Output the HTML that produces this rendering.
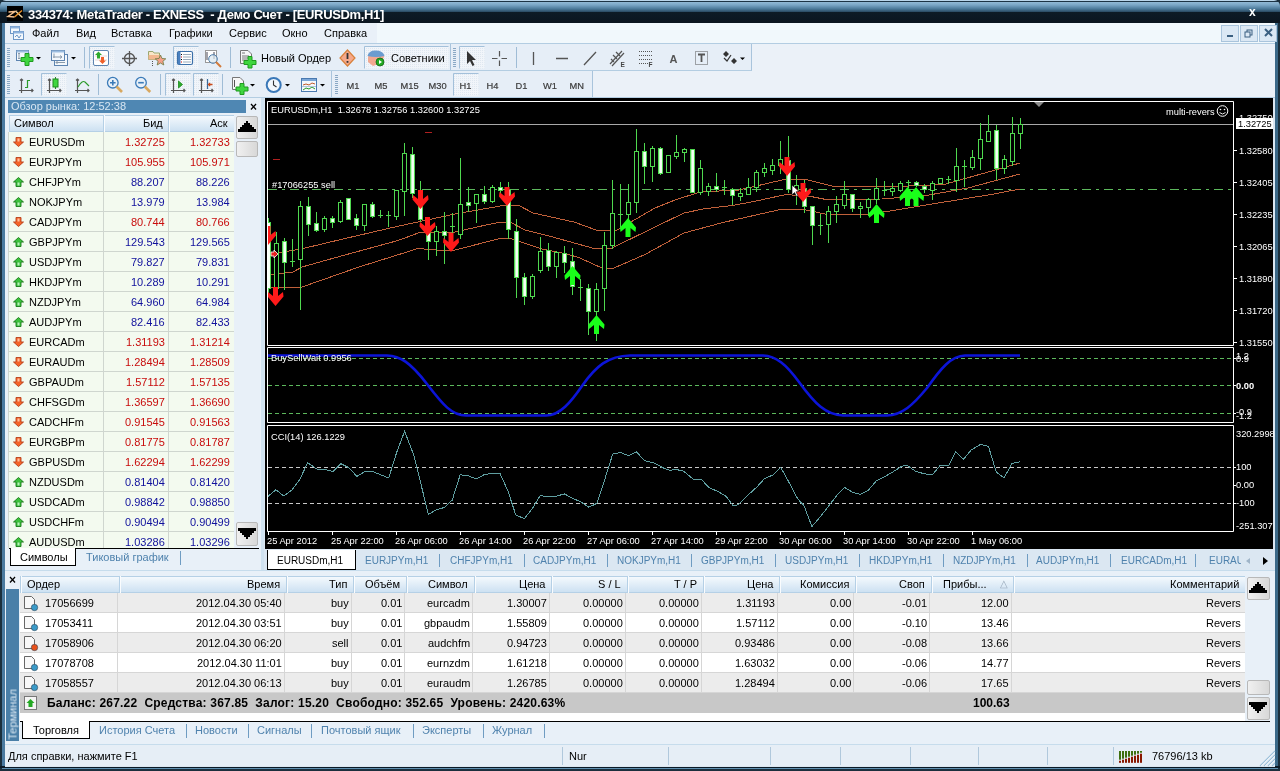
<!DOCTYPE html><html><head><meta charset="utf-8"><style>
*{margin:0;padding:0;box-sizing:border-box}
html,body{width:1280px;height:771px;overflow:hidden;-webkit-font-smoothing:antialiased;background:#3e6a8a;font-family:"Liberation Sans",sans-serif;font-size:11px;color:#000;position:relative}
.a{position:absolute}
.t{position:absolute;white-space:nowrap;line-height:13px}
svg{position:absolute;overflow:visible}
.t{will-change:transform}
</style></head><body><div class="a" style="left:0px;top:0px;width:1280px;height:771px;background:#1b2f3d"></div>
<div class="a" style="left:0px;top:0px;width:1280px;height:23px;background:linear-gradient(#b9d5ea 0,#b9d5ea 1px,#1d3445 1px,#1d3445 2px,#92bad6 2px,#7aa6c6 5px,#4a7898 9px,#2e5069 11.5px,#0d1b26 12px,#0b1620 22px);border-radius:6px 6px 0 0"></div>
<div class="a" style="left:2px;top:23px;width:3px;height:745px;background:#4a7aa0"></div>
<div class="a" style="left:1275px;top:23px;width:3px;height:745px;background:#3a6888"></div>
<div class="a" style="left:0px;top:766px;width:1280px;height:2px;background:#0b1a26"></div>
<div class="a" style="left:2px;top:768px;width:1276px;height:1px;background:#5f8fb0"></div>
<div class="a" style="left:7px;top:6px;width:16px;height:15px;background:#000"></div>
<svg style="left:7px;top:6px" width="16" height="15"><path d="M1.5 6 L8 5.5 L1 10.5 L7.5 11" stroke="#f2c090" stroke-width="1.5" fill="none"/><path d="M9 5.5 L15.5 11.5" stroke="#f0d8a8" stroke-width="1.5"/><path d="M15 4.5 L7.5 11" stroke="#e8902a" stroke-width="1.5"/></svg>
<div class="t" style="left:28px;top:7px;font-size:13px;color:#fff;font-weight:bold;letter-spacing:-0.34px;line-height:15px">334374: MetaTrader - EXNESS&nbsp; - Демо Счет - [EURUSDm,H1]</div>
<div class="t" style="left:1249px;top:6px;font-size:12px;color:#fff;font-weight:bold;">x</div>
<div class="a" style="left:5px;top:23px;width:1270px;height:20px;background:#f1f8fc"></div>
<div class="a" style="left:5px;top:23px;width:372px;height:20px;background:#e9f0f8"></div>
<div class="a" style="left:5px;top:43px;width:1270px;height:1px;background:#b3cde2"></div>
<svg style="left:10px;top:26px" width="14" height="14"><rect x="0.5" y="0.5" width="9" height="7" fill="#f4f8fc" stroke="#6d96c6"/><rect x="0.5" y="0.5" width="9" height="2" fill="#8fb3dd"/><rect x="3.5" y="5.5" width="10" height="8" fill="#f4f8fc" stroke="#6d96c6"/><rect x="3.5" y="5.5" width="10" height="2" fill="#8fb3dd"/><path d="M5 11 L7 9 L9 12 L11 9" stroke="#6d96c6" fill="none"/></svg>
<div class="t" style="left:32px;top:27px;font-size:11px;color:#000;font-weight:normal;">Файл</div>
<div class="t" style="left:76px;top:27px;font-size:11px;color:#000;font-weight:normal;">Вид</div>
<div class="t" style="left:111px;top:27px;font-size:11px;color:#000;font-weight:normal;">Вставка</div>
<div class="t" style="left:169px;top:27px;font-size:11px;color:#000;font-weight:normal;">Графики</div>
<div class="t" style="left:229px;top:27px;font-size:11px;color:#000;font-weight:normal;">Сервис</div>
<div class="t" style="left:282px;top:27px;font-size:11px;color:#000;font-weight:normal;">Окно</div>
<div class="t" style="left:324px;top:27px;font-size:11px;color:#000;font-weight:normal;">Справка</div>
<div class="a" style="left:1221px;top:25px;width:18px;height:17px;background:#dbe8f4;border:1px solid #a9c4dc"></div>
<div class="a" style="left:1240px;top:25px;width:18px;height:17px;background:#dbe8f4;border:1px solid #a9c4dc"></div>
<div class="a" style="left:1259px;top:25px;width:18px;height:17px;background:#dbe8f4;border:1px solid #a9c4dc"></div>
<svg style="left:1221px;top:25px" width="56" height="17"><rect x="6" y="10" width="6" height="2" fill="#3a5f80"/><rect x="26" y="5" width="5" height="5" fill="none" stroke="#3a5f80"/><rect x="24" y="7" width="5" height="5" fill="#dbe8f4" stroke="#3a5f80"/><path d="M44 4 L51 11 M51 4 L44 11" stroke="#3a5f80" stroke-width="2"/></svg>
<div class="a" style="left:5px;top:44px;width:1270px;height:26px;background:#e6eef7"></div>
<div class="a" style="left:5px;top:70px;width:747px;height:1px;background:#b3cde2"></div>
<div class="a" style="left:5px;top:71px;width:1270px;height:26px;background:#e6eef7"></div>
<div class="a" style="left:5px;top:97px;width:1270px;height:1px;background:#b3cde2"></div>
<svg style="left:0;top:0" width="1280" height="100" viewBox="0 0 1280 100" font-family="Liberation Sans"><defs><pattern id="dots" width="2" height="2" patternUnits="userSpaceOnUse"><rect width="2" height="2" fill="#f1f5fa"/><rect width="1" height="1" fill="#dfe7f0"/></pattern></defs><rect x="752" y="44" width="523" height="27" fill="#ebf1f8"/><rect x="593" y="71" width="682" height="26" fill="#ebf1f8"/><path d="M751.5 44 V70.5 M592.5 71 V97" stroke="#a9c4dc"/><path d="M450.5 44 V70 M331.5 71 V97" stroke="#a9c4dc"/><rect x="7" y="48" width="3" height="1" fill="#8aa8c4"/><rect x="7" y="50" width="3" height="1" fill="#8aa8c4"/><rect x="7" y="52" width="3" height="1" fill="#8aa8c4"/><rect x="7" y="54" width="3" height="1" fill="#8aa8c4"/><rect x="7" y="56" width="3" height="1" fill="#8aa8c4"/><rect x="7" y="58" width="3" height="1" fill="#8aa8c4"/><rect x="7" y="60" width="3" height="1" fill="#8aa8c4"/><rect x="7" y="62" width="3" height="1" fill="#8aa8c4"/><rect x="7" y="64" width="3" height="1" fill="#8aa8c4"/><rect x="7" y="66" width="3" height="1" fill="#8aa8c4"/><rect x="453" y="48" width="3" height="1" fill="#8aa8c4"/><rect x="453" y="50" width="3" height="1" fill="#8aa8c4"/><rect x="453" y="52" width="3" height="1" fill="#8aa8c4"/><rect x="453" y="54" width="3" height="1" fill="#8aa8c4"/><rect x="453" y="56" width="3" height="1" fill="#8aa8c4"/><rect x="453" y="58" width="3" height="1" fill="#8aa8c4"/><rect x="453" y="60" width="3" height="1" fill="#8aa8c4"/><rect x="453" y="62" width="3" height="1" fill="#8aa8c4"/><rect x="453" y="64" width="3" height="1" fill="#8aa8c4"/><rect x="453" y="66" width="3" height="1" fill="#8aa8c4"/><rect x="7" y="75" width="3" height="1" fill="#8aa8c4"/><rect x="7" y="77" width="3" height="1" fill="#8aa8c4"/><rect x="7" y="79" width="3" height="1" fill="#8aa8c4"/><rect x="7" y="81" width="3" height="1" fill="#8aa8c4"/><rect x="7" y="83" width="3" height="1" fill="#8aa8c4"/><rect x="7" y="85" width="3" height="1" fill="#8aa8c4"/><rect x="7" y="87" width="3" height="1" fill="#8aa8c4"/><rect x="7" y="89" width="3" height="1" fill="#8aa8c4"/><rect x="7" y="91" width="3" height="1" fill="#8aa8c4"/><rect x="7" y="93" width="3" height="1" fill="#8aa8c4"/><rect x="335" y="75" width="3" height="1" fill="#8aa8c4"/><rect x="335" y="77" width="3" height="1" fill="#8aa8c4"/><rect x="335" y="79" width="3" height="1" fill="#8aa8c4"/><rect x="335" y="81" width="3" height="1" fill="#8aa8c4"/><rect x="335" y="83" width="3" height="1" fill="#8aa8c4"/><rect x="335" y="85" width="3" height="1" fill="#8aa8c4"/><rect x="335" y="87" width="3" height="1" fill="#8aa8c4"/><rect x="335" y="89" width="3" height="1" fill="#8aa8c4"/><rect x="335" y="91" width="3" height="1" fill="#8aa8c4"/><rect x="335" y="93" width="3" height="1" fill="#8aa8c4"/><path d="M84.5 47 V68" stroke="#9fbcd6"/><path d="M230.5 47 V68" stroke="#9fbcd6"/><path d="M516.5 47 V68" stroke="#9fbcd6"/><path d="M98.5 74 V95" stroke="#9fbcd6"/><path d="M160.5 74 V95" stroke="#9fbcd6"/><path d="M222.5 74 V95" stroke="#9fbcd6"/><rect x="89.5" y="46.5" width="25" height="22" fill="url(#dots)"/><path d="M89.5 68.5 V46.5 H114.5" fill="none" stroke="#a3c0da"/><rect x="173.5" y="46.5" width="25" height="22" fill="url(#dots)"/><path d="M173.5 68.5 V46.5 H198.5" fill="none" stroke="#a3c0da"/><rect x="364.5" y="46.5" width="84" height="22" fill="url(#dots)"/><path d="M364.5 68.5 V46.5 H448.5" fill="none" stroke="#a3c0da"/><rect x="459.5" y="46.5" width="25" height="22" fill="url(#dots)"/><path d="M459.5 68.5 V46.5 H484.5" fill="none" stroke="#a3c0da"/><rect x="41.5" y="73.5" width="25" height="22" fill="url(#dots)"/><path d="M41.5 95.5 V73.5 H66.5" fill="none" stroke="#a3c0da"/><rect x="165.5" y="73.5" width="25" height="22" fill="url(#dots)"/><path d="M165.5 95.5 V73.5 H190.5" fill="none" stroke="#a3c0da"/><rect x="193.5" y="73.5" width="25" height="22" fill="url(#dots)"/><path d="M193.5 95.5 V73.5 H218.5" fill="none" stroke="#a3c0da"/><rect x="453.5" y="73.5" width="25" height="22" fill="url(#dots)"/><path d="M453.5 95.5 V73.5 H478.5" fill="none" stroke="#a3c0da"/><rect x="16.5" y="50.5" width="12" height="10" fill="#f4f8fc" stroke="#5d84b0"/><rect x="16.5" y="50.5" width="12" height="2" fill="#9dbde0"/><path d="M19 53 V59 M18 54 L19 53 L20 54 M18 58 L19 59 L20 58" stroke="#8a9aaa" fill="none"/><path d="M25 53.5 H29 V57.5 H33 V61.5 H29 V65.5 H25 V61.5 H21 V57.5 H25 Z" fill="#3fd63f" stroke="#1f9a1f"/><path d="M36 57 H41 L38.5 59.5 Z" fill="#000"/><rect x="54.5" y="54.5" width="13" height="11" fill="#f4f8fc" stroke="#5d84b0"/><rect x="51.5" y="50.5" width="13" height="10" fill="#f4f8fc" stroke="#5d84b0"/><rect x="51.5" y="50.5" width="13" height="2" fill="#9dbde0"/><path d="M53 57 H62 M60 55.5 L62 57 L60 58.5 M56 62.5 H65 M57.5 61 L56 62.5 L57.5 64 M54 53.5 V58" stroke="#8a9aaa" fill="none"/><path d="M71 57 H76 L73.5 59.5 Z" fill="#000"/><rect x="93.5" y="50.5" width="15" height="15" rx="1.5" fill="#fff" stroke="#5d84b0"/><path d="M95 56 H107 M95 60 H107" stroke="#e8d8d8"/><path d="M98.5 51.5 L102 55 H100 V58.5 H97 V55 H95 Z" fill="#2faa2f"/><path d="M102.5 64 L106 60.5 H104 V57 H101 V60.5 H99 Z" fill="#f0602a"/><circle cx="129.5" cy="58.5" r="5" fill="none" stroke="#555" stroke-width="1.3"/><path d="M129.5 51 V66 M122 58.5 H137" stroke="#555" stroke-width="1.3"/><path d="M148.5 51.5 H153 L154 53 H159.5 V59.5 H148.5 Z" fill="#f7e6c8" stroke="#9aa870"/><path d="M148.5 55 H159.5 V59.5 H148.5Z" fill="#f2b890"/><path d="M152.5 61 V66" stroke="#555" stroke-dasharray="1 1"/><path d="M160.5 55 L162 58.5 L165.8 58.8 L162.9 61.3 L163.8 65 L160.5 63 L157.2 65 L158.1 61.3 L155.2 58.8 L159 58.5 Z" fill="#f4a08a" stroke="#6a7a40" stroke-width="0.8"/><rect x="177.5" y="51.5" width="15" height="13" rx="1.5" fill="#fff" stroke="#3b6fa8" stroke-width="1.2"/><rect x="178" y="52" width="2.5" height="12" fill="#4a80c0"/><path d="M183 54.5 H191 M183 57 H191 M183 59.5 H191 M183 62 H191" stroke="#9ab"/><path d="M181 54.5 H182 M181 59.5 H182" stroke="#000"/><path d="M181 57 H182 M181 62 H182" stroke="#c00"/><rect x="205.5" y="50.5" width="11" height="12" fill="#fff" stroke="#999"/><path d="M207 52 V60 M214 52 V59" stroke="#445"/><circle cx="213" cy="59" r="4.3" fill="#dce8f0" fill-opacity="0.7" stroke="#4a7aa8"/><path d="M216 62 L221 67" stroke="#d27a3a" stroke-width="2"/><path d="M240.5 50.5 H248 L251.5 54 V63.5 H240.5 Z" fill="#f7f7f7" stroke="#777"/><path d="M242 53 H245 M242 56 H249 M242 58 H249 M242 60 H247" stroke="#777"/><path d="M248 56.5 H252 V60.5 H256 V64.5 H252 V68 H248 V64.5 H244 V60.5 H248 Z" fill="#3fd63f" stroke="#1f9a1f"/><path d="M347.5 50 L355 58 L347.5 66 L340 58 Z" fill="#f6a88a" stroke="#d8803a" stroke-width="1.2"/><path d="M347.5 53 V59" stroke="#333" stroke-width="1.8"/><rect x="346.6" y="61" width="1.8" height="1.8" fill="#333"/><path d="M368 58 Q368 51 375.5 51 Q384 51 384 57 L381 63 L373 66 L368 62 Z" fill="#f2a890"/><path d="M367.5 56 Q369 50 376 50.5 Q383 50.5 384.5 56 Q376 58 367.5 56 Z" fill="#6a9cd0"/><circle cx="380" cy="62" r="4" fill="#22aa22" stroke="#156615" stroke-width="0.8"/><path d="M379 60 L382 62 L379 64 Z" fill="#fff"/><path d="M467 51 V64 L470 61 L472.5 66 L474.5 65 L472 60 L476 60 Z" fill="#333"/><path d="M499.5 51 V56.5 M499.5 60.5 V66 M492 58.5 H497.5 M501.5 58.5 H507" stroke="#555" stroke-width="1.2"/><path d="M533.5 52 V65 M556 58.5 H568 M584 65 L596 52" stroke="#555" stroke-width="1.3"/><path d="M610 64 L622 51 M612 66 L624 53 M613 55 L617 59 M616 52 L620 56 M611 59 L614 62" stroke="#555" stroke-width="1.2"/><text x="620.5" y="66.5" font-size="6.5" font-weight="bold" fill="#444">E</text><path d="M639 51.5 H652 M639 55.5 H652 M639 59.5 H652 M639 63.5 H648" stroke="#555" stroke-dasharray="1 1"/><text x="648.5" y="66.5" font-size="6.5" font-weight="bold" fill="#444">F</text><text x="669.5" y="63" font-size="11" font-weight="bold" fill="#555">A</text><rect x="695.5" y="51.5" width="12" height="13" fill="none" stroke="#555" stroke-dasharray="1 1"/><path d="M698 54.5 H705 M701.5 54.5 V62" stroke="#555" stroke-width="1.8"/><path d="M726 51 L729 54 L726 57 L723 54 Z M734 58 L737 61 L734 64 L731 61 Z" fill="#333"/><path d="M724 58 L727 61 L731 55" stroke="#333" stroke-width="1.2" fill="none"/><path d="M740 57.5 H745 L742.5 60 Z" fill="#000"/><path d="M21.5 79 V93 M19 90.5 H33 M20 80.5 L21.5 79 L23 80.5 M31.5 89 L33 90.5 L31.5 92" stroke="#555" stroke-width="1.2" fill="none"/><path d="M27.5 80 V88 M27.5 80.5 H30 M25 87.5 H27.5" stroke="#2a9a2a" stroke-width="1.2"/><path d="M49.5 79 V93 M47 90.5 H61 M48 80.5 L49.5 79 L51 80.5 M59.5 89 L61 90.5 L59.5 92" stroke="#555" stroke-width="1.2" fill="none"/><path d="M55.5 77 V89" stroke="#2a8a2a"/><rect x="53" y="79" width="5" height="8" fill="#3fd63f" stroke="#1f8a1f"/><path d="M77.5 79 V93 M75 90.5 H89 M76 80.5 L77.5 79 L79 80.5 M87.5 89 L89 90.5 L87.5 92" stroke="#555" stroke-width="1.2" fill="none"/><path d="M78 87 Q82 80 85 82 Q87 84 89 86" stroke="#2a9a2a" stroke-width="1.1" fill="none"/><circle cx="112.8" cy="82.7" r="5.3" fill="#e8f0f8" stroke="#3a7ab8" stroke-width="1.3"/><path d="M110 82.7 H115.6 M112.8 79.9 V85.5" stroke="#3a7ab8" stroke-width="1.6"/><path d="M116.5 86.5 L122 92" stroke="#d8a860" stroke-width="2.6"/><circle cx="141" cy="82.7" r="5.3" fill="#e8f0f8" stroke="#3a7ab8" stroke-width="1.3"/><path d="M138.2 82.7 H143.8" stroke="#3a7ab8" stroke-width="1.6"/><path d="M144.7 86.5 L150.2 92" stroke="#d8a860" stroke-width="2.6"/><path d="M173.5 79 V93 M171 90.5 H185 M172 80.5 L173.5 79 L175 80.5 M183.5 89 L185 90.5 L183.5 92" stroke="#555" stroke-width="1.2" fill="none"/><path d="M178.5 81 L182.5 84.5 L178.5 88 Z" fill="#2faa2f" stroke="#1a8a1a" stroke-width="0.8"/><path d="M201.5 79 V93 M199 90.5 H213 M200 80.5 L201.5 79 L203 80.5 M211.5 89 L213 90.5 L211.5 92" stroke="#555" stroke-width="1.2" fill="none"/><path d="M207.5 79 V89" stroke="#3a6a9a" stroke-width="1.2"/><path d="M212.5 84.5 H208.5 M210 83 L208.5 84.5 L210 86" stroke="#c84a1a" stroke-width="1.3" fill="none"/><path d="M232.5 77.5 H240 L243.5 81 V89.5 H232.5 Z" fill="#f7f7f7" stroke="#777"/><path d="M234.5 80 V87" stroke="#555"/><path d="M240 83.5 H244 V87 H248 V91 H244 V94.5 H240 V91 H236 V87 H240 Z" fill="#3fd63f" stroke="#1f9a1f"/><path d="M250 84 H255 L252.5 86.5 Z" fill="#000"/><circle cx="273.7" cy="85" r="7" fill="#f4f8fc" stroke="#3a78b8" stroke-width="2"/><path d="M273.5 80.5 V85 L276.5 87" stroke="#333" stroke-width="1.1" fill="none"/><path d="M285 84 H290 L287.5 86.5 Z" fill="#000"/><rect x="301.5" y="78.5" width="15" height="13" fill="#f4f8fc" stroke="#4a7ab0"/><rect x="302" y="79" width="14" height="2" fill="#7aa6d8"/><path d="M303 85 L306 84 L309 85 L312 83 L315 84" stroke="#c05a2a" fill="none"/><path d="M303 90 L306 88 L309 89 L312 87 L315 89" stroke="#2a9a2a" fill="none"/><path d="M302 86.5 H316" stroke="#b0c4d8"/><path d="M320 84 H325 L322.5 86.5 Z" fill="#000"/><text x="346.5" y="89" font-size="9.3" fill="#3a3a3a" stroke="#3a3a3a" stroke-width="0.2">M1</text><text x="374.5" y="89" font-size="9.3" fill="#3a3a3a" stroke="#3a3a3a" stroke-width="0.2">M5</text><text x="400.5" y="89" font-size="9.3" fill="#3a3a3a" stroke="#3a3a3a" stroke-width="0.2">M15</text><text x="428.5" y="89" font-size="9.3" fill="#3a3a3a" stroke="#3a3a3a" stroke-width="0.2">M30</text><text x="459.5" y="89" font-size="9.3" fill="#3a3a3a" stroke="#3a3a3a" stroke-width="0.2">H1</text><text x="486.5" y="89" font-size="9.3" fill="#3a3a3a" stroke="#3a3a3a" stroke-width="0.2">H4</text><text x="515.5" y="89" font-size="9.3" fill="#3a3a3a" stroke="#3a3a3a" stroke-width="0.2">D1</text><text x="543" y="89" font-size="9.3" fill="#3a3a3a" stroke="#3a3a3a" stroke-width="0.2">W1</text><text x="569.5" y="89" font-size="9.3" fill="#3a3a3a" stroke="#3a3a3a" stroke-width="0.2">MN</text></svg>
<div class="t" style="left:261px;top:52px;font-size:11px;color:#000;font-weight:normal;">Новый Ордер</div>
<div class="t" style="left:391px;top:52px;font-size:11px;color:#000;font-weight:normal;">Советники</div>
<div class="a" style="left:5px;top:98px;width:1270px;height:669px;background:#dbe7f2"></div>
<div class="a" style="left:5px;top:98px;width:259px;height:473px;background:#e8f0f8"></div>
<div class="a" style="left:8px;top:100px;width:238px;height:13px;background:#4f87b3"></div>
<div class="t" style="left:11px;top:100px;font-size:11px;color:#d8e6f2;font-weight:normal;">Обзор рынка: 12:52:38</div>
<div class="t" style="left:250px;top:101px;font-size:12px;color:#000;font-weight:bold;">×</div>
<div class="a" style="left:9px;top:115px;width:225px;height:17px;background:linear-gradient(#f4f9fd,#cde1f2);border-top:1px solid #b5d0e6;border-bottom:1px solid #b5d0e6"></div>
<div class="a" style="left:9px;top:115px;width:1px;height:17px;background:#b5d0e6"></div>
<div class="a" style="left:103px;top:115px;width:1px;height:17px;background:#b5d0e6"></div>
<div class="a" style="left:168px;top:115px;width:1px;height:17px;background:#b5d0e6"></div>
<div class="a" style="left:104px;top:115px;width:1px;height:17px;background:#fafcfe"></div>
<div class="a" style="left:169px;top:115px;width:1px;height:17px;background:#fafcfe"></div>
<div class="t" style="left:14px;top:117px;font-size:11px;color:#000;font-weight:normal;">Символ</div>
<div class="t" style="right:1117px;top:117px;font-size:11px;color:#000;font-weight:normal;">Бид</div>
<div class="t" style="right:1052px;top:117px;font-size:11px;color:#000;font-weight:normal;">Аск</div>
<div class="a" style="left:9px;top:132px;width:225px;height:416px;background:#f3faef;overflow:hidden"></div>
<div class="a" style="left:9px;top:151px;width:225px;height:1px;background:#cfd6cf"></div>
<div class="t" style="left:29px;top:136px;font-size:11px;color:#000;font-weight:normal;">EURUSDm</div>
<div class="t" style="right:1115px;top:136px;font-size:11px;color:#c80c0c;font-weight:normal;">1.32725</div>
<div class="t" style="right:1050px;top:136px;font-size:11px;color:#c80c0c;font-weight:normal;">1.32733</div>
<svg style="left:13px;top:137px" width="11" height="10"><path d="M5.5 9.5 L10.5 5 L8 5 L8 0.5 L3 0.5 L3 5 L0.5 5 Z" fill="#f4642a" stroke="#b8401a" stroke-width="0.9"/><path d="M4.5 1.5 H6.5 V4.5 H4.5 Z" fill="#ffc0a0"/></svg>
<div class="a" style="left:9px;top:171px;width:225px;height:1px;background:#cfd6cf"></div>
<div class="t" style="left:29px;top:156px;font-size:11px;color:#000;font-weight:normal;">EURJPYm</div>
<div class="t" style="right:1115px;top:156px;font-size:11px;color:#c80c0c;font-weight:normal;">105.955</div>
<div class="t" style="right:1050px;top:156px;font-size:11px;color:#c80c0c;font-weight:normal;">105.971</div>
<svg style="left:13px;top:157px" width="11" height="10"><path d="M5.5 9.5 L10.5 5 L8 5 L8 0.5 L3 0.5 L3 5 L0.5 5 Z" fill="#f4642a" stroke="#b8401a" stroke-width="0.9"/><path d="M4.5 1.5 H6.5 V4.5 H4.5 Z" fill="#ffc0a0"/></svg>
<div class="a" style="left:9px;top:191px;width:225px;height:1px;background:#cfd6cf"></div>
<div class="t" style="left:29px;top:176px;font-size:11px;color:#000;font-weight:normal;">CHFJPYm</div>
<div class="t" style="right:1115px;top:176px;font-size:11px;color:#10109c;font-weight:normal;">88.207</div>
<div class="t" style="right:1050px;top:176px;font-size:11px;color:#10109c;font-weight:normal;">88.226</div>
<svg style="left:13px;top:177px" width="11" height="10"><path d="M5.5 0.5 L10.5 5 L8 5 L8 9.5 L3 9.5 L3 5 L0.5 5 Z" fill="#3cc03c" stroke="#1a7a1a" stroke-width="0.9"/><path d="M4.5 5.5 H6.5 V8.5 H4.5 Z" fill="#b8f0b8"/></svg>
<div class="a" style="left:9px;top:211px;width:225px;height:1px;background:#cfd6cf"></div>
<div class="t" style="left:29px;top:196px;font-size:11px;color:#000;font-weight:normal;">NOKJPYm</div>
<div class="t" style="right:1115px;top:196px;font-size:11px;color:#10109c;font-weight:normal;">13.979</div>
<div class="t" style="right:1050px;top:196px;font-size:11px;color:#10109c;font-weight:normal;">13.984</div>
<svg style="left:13px;top:197px" width="11" height="10"><path d="M5.5 0.5 L10.5 5 L8 5 L8 9.5 L3 9.5 L3 5 L0.5 5 Z" fill="#3cc03c" stroke="#1a7a1a" stroke-width="0.9"/><path d="M4.5 5.5 H6.5 V8.5 H4.5 Z" fill="#b8f0b8"/></svg>
<div class="a" style="left:9px;top:231px;width:225px;height:1px;background:#cfd6cf"></div>
<div class="t" style="left:29px;top:216px;font-size:11px;color:#000;font-weight:normal;">CADJPYm</div>
<div class="t" style="right:1115px;top:216px;font-size:11px;color:#c80c0c;font-weight:normal;">80.744</div>
<div class="t" style="right:1050px;top:216px;font-size:11px;color:#c80c0c;font-weight:normal;">80.766</div>
<svg style="left:13px;top:217px" width="11" height="10"><path d="M5.5 9.5 L10.5 5 L8 5 L8 0.5 L3 0.5 L3 5 L0.5 5 Z" fill="#f4642a" stroke="#b8401a" stroke-width="0.9"/><path d="M4.5 1.5 H6.5 V4.5 H4.5 Z" fill="#ffc0a0"/></svg>
<div class="a" style="left:9px;top:251px;width:225px;height:1px;background:#cfd6cf"></div>
<div class="t" style="left:29px;top:236px;font-size:11px;color:#000;font-weight:normal;">GBPJPYm</div>
<div class="t" style="right:1115px;top:236px;font-size:11px;color:#10109c;font-weight:normal;">129.543</div>
<div class="t" style="right:1050px;top:236px;font-size:11px;color:#10109c;font-weight:normal;">129.565</div>
<svg style="left:13px;top:237px" width="11" height="10"><path d="M5.5 0.5 L10.5 5 L8 5 L8 9.5 L3 9.5 L3 5 L0.5 5 Z" fill="#3cc03c" stroke="#1a7a1a" stroke-width="0.9"/><path d="M4.5 5.5 H6.5 V8.5 H4.5 Z" fill="#b8f0b8"/></svg>
<div class="a" style="left:9px;top:271px;width:225px;height:1px;background:#cfd6cf"></div>
<div class="t" style="left:29px;top:256px;font-size:11px;color:#000;font-weight:normal;">USDJPYm</div>
<div class="t" style="right:1115px;top:256px;font-size:11px;color:#10109c;font-weight:normal;">79.827</div>
<div class="t" style="right:1050px;top:256px;font-size:11px;color:#10109c;font-weight:normal;">79.831</div>
<svg style="left:13px;top:257px" width="11" height="10"><path d="M5.5 0.5 L10.5 5 L8 5 L8 9.5 L3 9.5 L3 5 L0.5 5 Z" fill="#3cc03c" stroke="#1a7a1a" stroke-width="0.9"/><path d="M4.5 5.5 H6.5 V8.5 H4.5 Z" fill="#b8f0b8"/></svg>
<div class="a" style="left:9px;top:291px;width:225px;height:1px;background:#cfd6cf"></div>
<div class="t" style="left:29px;top:276px;font-size:11px;color:#000;font-weight:normal;">HKDJPYm</div>
<div class="t" style="right:1115px;top:276px;font-size:11px;color:#10109c;font-weight:normal;">10.289</div>
<div class="t" style="right:1050px;top:276px;font-size:11px;color:#10109c;font-weight:normal;">10.291</div>
<svg style="left:13px;top:277px" width="11" height="10"><path d="M5.5 0.5 L10.5 5 L8 5 L8 9.5 L3 9.5 L3 5 L0.5 5 Z" fill="#3cc03c" stroke="#1a7a1a" stroke-width="0.9"/><path d="M4.5 5.5 H6.5 V8.5 H4.5 Z" fill="#b8f0b8"/></svg>
<div class="a" style="left:9px;top:311px;width:225px;height:1px;background:#cfd6cf"></div>
<div class="t" style="left:29px;top:296px;font-size:11px;color:#000;font-weight:normal;">NZDJPYm</div>
<div class="t" style="right:1115px;top:296px;font-size:11px;color:#10109c;font-weight:normal;">64.960</div>
<div class="t" style="right:1050px;top:296px;font-size:11px;color:#10109c;font-weight:normal;">64.984</div>
<svg style="left:13px;top:297px" width="11" height="10"><path d="M5.5 0.5 L10.5 5 L8 5 L8 9.5 L3 9.5 L3 5 L0.5 5 Z" fill="#3cc03c" stroke="#1a7a1a" stroke-width="0.9"/><path d="M4.5 5.5 H6.5 V8.5 H4.5 Z" fill="#b8f0b8"/></svg>
<div class="a" style="left:9px;top:331px;width:225px;height:1px;background:#cfd6cf"></div>
<div class="t" style="left:29px;top:316px;font-size:11px;color:#000;font-weight:normal;">AUDJPYm</div>
<div class="t" style="right:1115px;top:316px;font-size:11px;color:#10109c;font-weight:normal;">82.416</div>
<div class="t" style="right:1050px;top:316px;font-size:11px;color:#10109c;font-weight:normal;">82.433</div>
<svg style="left:13px;top:317px" width="11" height="10"><path d="M5.5 0.5 L10.5 5 L8 5 L8 9.5 L3 9.5 L3 5 L0.5 5 Z" fill="#3cc03c" stroke="#1a7a1a" stroke-width="0.9"/><path d="M4.5 5.5 H6.5 V8.5 H4.5 Z" fill="#b8f0b8"/></svg>
<div class="a" style="left:9px;top:351px;width:225px;height:1px;background:#cfd6cf"></div>
<div class="t" style="left:29px;top:336px;font-size:11px;color:#000;font-weight:normal;">EURCADm</div>
<div class="t" style="right:1115px;top:336px;font-size:11px;color:#c80c0c;font-weight:normal;">1.31193</div>
<div class="t" style="right:1050px;top:336px;font-size:11px;color:#c80c0c;font-weight:normal;">1.31214</div>
<svg style="left:13px;top:337px" width="11" height="10"><path d="M5.5 9.5 L10.5 5 L8 5 L8 0.5 L3 0.5 L3 5 L0.5 5 Z" fill="#f4642a" stroke="#b8401a" stroke-width="0.9"/><path d="M4.5 1.5 H6.5 V4.5 H4.5 Z" fill="#ffc0a0"/></svg>
<div class="a" style="left:9px;top:371px;width:225px;height:1px;background:#cfd6cf"></div>
<div class="t" style="left:29px;top:356px;font-size:11px;color:#000;font-weight:normal;">EURAUDm</div>
<div class="t" style="right:1115px;top:356px;font-size:11px;color:#c80c0c;font-weight:normal;">1.28494</div>
<div class="t" style="right:1050px;top:356px;font-size:11px;color:#c80c0c;font-weight:normal;">1.28509</div>
<svg style="left:13px;top:357px" width="11" height="10"><path d="M5.5 9.5 L10.5 5 L8 5 L8 0.5 L3 0.5 L3 5 L0.5 5 Z" fill="#f4642a" stroke="#b8401a" stroke-width="0.9"/><path d="M4.5 1.5 H6.5 V4.5 H4.5 Z" fill="#ffc0a0"/></svg>
<div class="a" style="left:9px;top:391px;width:225px;height:1px;background:#cfd6cf"></div>
<div class="t" style="left:29px;top:376px;font-size:11px;color:#000;font-weight:normal;">GBPAUDm</div>
<div class="t" style="right:1115px;top:376px;font-size:11px;color:#c80c0c;font-weight:normal;">1.57112</div>
<div class="t" style="right:1050px;top:376px;font-size:11px;color:#c80c0c;font-weight:normal;">1.57135</div>
<svg style="left:13px;top:377px" width="11" height="10"><path d="M5.5 9.5 L10.5 5 L8 5 L8 0.5 L3 0.5 L3 5 L0.5 5 Z" fill="#f4642a" stroke="#b8401a" stroke-width="0.9"/><path d="M4.5 1.5 H6.5 V4.5 H4.5 Z" fill="#ffc0a0"/></svg>
<div class="a" style="left:9px;top:411px;width:225px;height:1px;background:#cfd6cf"></div>
<div class="t" style="left:29px;top:396px;font-size:11px;color:#000;font-weight:normal;">CHFSGDm</div>
<div class="t" style="right:1115px;top:396px;font-size:11px;color:#c80c0c;font-weight:normal;">1.36597</div>
<div class="t" style="right:1050px;top:396px;font-size:11px;color:#c80c0c;font-weight:normal;">1.36690</div>
<svg style="left:13px;top:397px" width="11" height="10"><path d="M5.5 9.5 L10.5 5 L8 5 L8 0.5 L3 0.5 L3 5 L0.5 5 Z" fill="#f4642a" stroke="#b8401a" stroke-width="0.9"/><path d="M4.5 1.5 H6.5 V4.5 H4.5 Z" fill="#ffc0a0"/></svg>
<div class="a" style="left:9px;top:431px;width:225px;height:1px;background:#cfd6cf"></div>
<div class="t" style="left:29px;top:416px;font-size:11px;color:#000;font-weight:normal;">CADCHFm</div>
<div class="t" style="right:1115px;top:416px;font-size:11px;color:#c80c0c;font-weight:normal;">0.91545</div>
<div class="t" style="right:1050px;top:416px;font-size:11px;color:#c80c0c;font-weight:normal;">0.91563</div>
<svg style="left:13px;top:417px" width="11" height="10"><path d="M5.5 9.5 L10.5 5 L8 5 L8 0.5 L3 0.5 L3 5 L0.5 5 Z" fill="#f4642a" stroke="#b8401a" stroke-width="0.9"/><path d="M4.5 1.5 H6.5 V4.5 H4.5 Z" fill="#ffc0a0"/></svg>
<div class="a" style="left:9px;top:451px;width:225px;height:1px;background:#cfd6cf"></div>
<div class="t" style="left:29px;top:436px;font-size:11px;color:#000;font-weight:normal;">EURGBPm</div>
<div class="t" style="right:1115px;top:436px;font-size:11px;color:#c80c0c;font-weight:normal;">0.81775</div>
<div class="t" style="right:1050px;top:436px;font-size:11px;color:#c80c0c;font-weight:normal;">0.81787</div>
<svg style="left:13px;top:437px" width="11" height="10"><path d="M5.5 9.5 L10.5 5 L8 5 L8 0.5 L3 0.5 L3 5 L0.5 5 Z" fill="#f4642a" stroke="#b8401a" stroke-width="0.9"/><path d="M4.5 1.5 H6.5 V4.5 H4.5 Z" fill="#ffc0a0"/></svg>
<div class="a" style="left:9px;top:471px;width:225px;height:1px;background:#cfd6cf"></div>
<div class="t" style="left:29px;top:456px;font-size:11px;color:#000;font-weight:normal;">GBPUSDm</div>
<div class="t" style="right:1115px;top:456px;font-size:11px;color:#c80c0c;font-weight:normal;">1.62294</div>
<div class="t" style="right:1050px;top:456px;font-size:11px;color:#c80c0c;font-weight:normal;">1.62299</div>
<svg style="left:13px;top:457px" width="11" height="10"><path d="M5.5 9.5 L10.5 5 L8 5 L8 0.5 L3 0.5 L3 5 L0.5 5 Z" fill="#f4642a" stroke="#b8401a" stroke-width="0.9"/><path d="M4.5 1.5 H6.5 V4.5 H4.5 Z" fill="#ffc0a0"/></svg>
<div class="a" style="left:9px;top:491px;width:225px;height:1px;background:#cfd6cf"></div>
<div class="t" style="left:29px;top:476px;font-size:11px;color:#000;font-weight:normal;">NZDUSDm</div>
<div class="t" style="right:1115px;top:476px;font-size:11px;color:#10109c;font-weight:normal;">0.81404</div>
<div class="t" style="right:1050px;top:476px;font-size:11px;color:#10109c;font-weight:normal;">0.81420</div>
<svg style="left:13px;top:477px" width="11" height="10"><path d="M5.5 0.5 L10.5 5 L8 5 L8 9.5 L3 9.5 L3 5 L0.5 5 Z" fill="#3cc03c" stroke="#1a7a1a" stroke-width="0.9"/><path d="M4.5 5.5 H6.5 V8.5 H4.5 Z" fill="#b8f0b8"/></svg>
<div class="a" style="left:9px;top:511px;width:225px;height:1px;background:#cfd6cf"></div>
<div class="t" style="left:29px;top:496px;font-size:11px;color:#000;font-weight:normal;">USDCADm</div>
<div class="t" style="right:1115px;top:496px;font-size:11px;color:#10109c;font-weight:normal;">0.98842</div>
<div class="t" style="right:1050px;top:496px;font-size:11px;color:#10109c;font-weight:normal;">0.98850</div>
<svg style="left:13px;top:497px" width="11" height="10"><path d="M5.5 0.5 L10.5 5 L8 5 L8 9.5 L3 9.5 L3 5 L0.5 5 Z" fill="#3cc03c" stroke="#1a7a1a" stroke-width="0.9"/><path d="M4.5 5.5 H6.5 V8.5 H4.5 Z" fill="#b8f0b8"/></svg>
<div class="a" style="left:9px;top:531px;width:225px;height:1px;background:#cfd6cf"></div>
<div class="t" style="left:29px;top:516px;font-size:11px;color:#000;font-weight:normal;">USDCHFm</div>
<div class="t" style="right:1115px;top:516px;font-size:11px;color:#10109c;font-weight:normal;">0.90494</div>
<div class="t" style="right:1050px;top:516px;font-size:11px;color:#10109c;font-weight:normal;">0.90499</div>
<svg style="left:13px;top:517px" width="11" height="10"><path d="M5.5 0.5 L10.5 5 L8 5 L8 9.5 L3 9.5 L3 5 L0.5 5 Z" fill="#3cc03c" stroke="#1a7a1a" stroke-width="0.9"/><path d="M4.5 5.5 H6.5 V8.5 H4.5 Z" fill="#b8f0b8"/></svg>
<div class="a" style="left:9px;top:551px;width:225px;height:1px;background:#cfd6cf"></div>
<div class="t" style="left:29px;top:536px;font-size:11px;color:#000;font-weight:normal;">AUDUSDm</div>
<div class="t" style="right:1115px;top:536px;font-size:11px;color:#10109c;font-weight:normal;">1.03286</div>
<div class="t" style="right:1050px;top:536px;font-size:11px;color:#10109c;font-weight:normal;">1.03296</div>
<svg style="left:13px;top:537px" width="11" height="10"><path d="M5.5 0.5 L10.5 5 L8 5 L8 9.5 L3 9.5 L3 5 L0.5 5 Z" fill="#3cc03c" stroke="#1a7a1a" stroke-width="0.9"/><path d="M4.5 5.5 H6.5 V8.5 H4.5 Z" fill="#b8f0b8"/></svg>
<div class="a" style="left:103px;top:132px;width:1px;height:416px;background:#cfd6cf"></div>
<div class="a" style="left:168px;top:132px;width:1px;height:416px;background:#cfd6cf"></div>
<div class="a" style="left:8px;top:132px;width:1px;height:416px;background:#cfd6cf"></div>
<div class="a" style="left:5px;top:548px;width:259px;height:23px;background:#e8f0f8"></div>
<div class="a" style="left:236px;top:116px;width:22px;height:23px;background:linear-gradient(90deg,#f0f0f0,#d8d8d8);border:1px solid #b8b8b8;border-radius:2px"></div>
<svg style="left:239px;top:120px" width="16" height="14"><path d="M-1 12 H17 V9 H15 V7 H13 V5 H11 V3 H9 V1 H7 V3 H5 V5 H3 V7 H1 V9 H-1 Z" fill="#000"/></svg>
<div class="a" style="left:236px;top:141px;width:22px;height:16px;background:linear-gradient(90deg,#f0f0f0,#d8d8d8);border:1px solid #b8b8b8;border-radius:2px"></div>
<div class="a" style="left:236px;top:522px;width:22px;height:24px;background:linear-gradient(90deg,#f0f0f0,#d8d8d8);border:1px solid #b8b8b8;border-radius:2px"></div>
<svg style="left:239px;top:527px" width="16" height="14"><path d="M-1 1 H17 V4 H15 V6 H13 V8 H11 V10 H9 V12 H7 V10 H5 V8 H3 V6 H1 V4 H-1 Z" fill="#000"/></svg>
<div class="a" style="left:9px;top:548px;width:250px;height:1px;background:#000"></div>
<div class="a" style="left:10px;top:548px;width:66px;height:18px;background:#fff;border:1px solid #000;border-top:none"></div>
<div class="t" style="left:20px;top:551px;font-size:11px;color:#000;font-weight:normal;">Символы</div>
<div class="t" style="left:86px;top:551px;font-size:11px;color:#4f82ad;font-weight:normal;">Тиковый график</div>
<div class="a" style="left:180px;top:551px;width:1px;height:14px;background:#6f9cc2"></div>
<div class="a" style="left:261px;top:98px;width:3px;height:473px;background:#d0e2f0"></div>
<svg style="left:265px;top:98px" width="1008" height="451" viewBox="265 98 1008 451" font-family="Liberation Sans" font-size="9.3" fill="#fff"><rect x="265" y="98" width="1008" height="451" fill="#000"/><defs><clipPath id="mc"><rect x="268" y="102" width="965" height="243"/></clipPath><clipPath id="i1"><rect x="268" y="348" width="965" height="74"/></clipPath><clipPath id="i2"><rect x="268" y="426" width="965" height="105"/></clipPath><linearGradient id="wb" x1="0" x2="1" y1="0" y2="0"><stop offset="0" stop-color="#7cf07c"/><stop offset="0.45" stop-color="#f4fff4"/><stop offset="0.7" stop-color="#ffffff"/><stop offset="1" stop-color="#a8f4a8"/></linearGradient></defs><path d="M267.5 101.5 H1233.5 V345.5 H267.5 Z" fill="none" stroke="#fff" stroke-width="1"/><path d="M267.5 347.5 H1233.5 V422.5 H267.5 Z" fill="none" stroke="#fff" stroke-width="1"/><path d="M267.5 425.5 H1233.5 V531.5 H267.5 Z" fill="none" stroke="#fff" stroke-width="1"/><g clip-path="url(#mc)"><path d="M268 189.5 H1233" stroke="#5cb85c" stroke-width="1" stroke-dasharray="9 5 3 5" /><path d="M268 124.5 H1233" stroke="#a8a8a8" stroke-width="1"/><path d="M273 159.5 H280 M425 132.5 H432" stroke="#b02020" stroke-width="1"/><path d="M266 255 L301 249 L343 239 L399 226 L455 214 L506 205 L518 205 L533 213 L574 222 L596 230 L617 230 L655 208 L675 200 L700 192 L739 190 L782 180 L806 179.5 L832 186 L857 186 L866 187 L897 186.5 L944 184.5 L1020 163" fill="none" stroke="#c0603a" stroke-width="1" shape-rendering="crispEdges"/><path d="M266 275 L293 272 L302 267 L343 255.5 L398 240.5 L421 232 L455 232 L486 225 L499 222.5 L510 222 L525 230 L549 236 L596 249 L611 248.5 L655 227 L684 213 L703 209 L732 205.5 L754 201.5 L786 194.5 L811 196.5 L826 199.5 L882 199 L929 195 L968 188 L1020 174" fill="none" stroke="#c0603a" stroke-width="1" shape-rendering="crispEdges"/><path d="M266 287.5 L296 287.5 L302 287 L359 267 L418 248.5 L437 250 L455 250 L500 238.5 L510 238.5 L521 242 L542 249 L567 254 L580 258 L603 268.5 L614 268 L645 254.5 L684 233 L723 222.5 L778 210 L804 209.5 L825 214 L869 214 L887 211.5 L929 204.5 L991 194.5 L1020 189" fill="none" stroke="#c0603a" stroke-width="1" shape-rendering="crispEdges"/><path d="M268.5 218.0 V293.0" stroke="#4fd84f" stroke-width="1"/><rect x="266.5" y="222.5" width="4" height="66.0" fill="url(#wb)" stroke="#4fd84f" stroke-width="1"/><path d="M276.5 232.0 V291.0" stroke="#4fd84f" stroke-width="1"/><rect x="274.5" y="243.5" width="4" height="45.0" fill="#000" stroke="#4fd84f" stroke-width="1"/><path d="M284.5 238.0 V290.0" stroke="#4fd84f" stroke-width="1"/><rect x="282.5" y="241.5" width="4" height="21.0" fill="url(#wb)" stroke="#4fd84f" stroke-width="1"/><path d="M292.5 239.0 V267.0" stroke="#4fd84f" stroke-width="1"/><path d="M290 261.5 H295" stroke="#4fd84f" stroke-width="1"/><path d="M300.5 201.0 V310.0" stroke="#4fd84f" stroke-width="1"/><rect x="298.5" y="206.5" width="4" height="53.0" fill="#000" stroke="#4fd84f" stroke-width="1"/><path d="M308.5 197.0 V236.0" stroke="#4fd84f" stroke-width="1"/><rect x="306.5" y="206.5" width="4" height="18.0" fill="url(#wb)" stroke="#4fd84f" stroke-width="1"/><path d="M316.5 212.0 V232.0" stroke="#4fd84f" stroke-width="1"/><rect x="314.5" y="223.5" width="4" height="7.0" fill="url(#wb)" stroke="#4fd84f" stroke-width="1"/><path d="M324.5 216.0 V232.0" stroke="#4fd84f" stroke-width="1"/><rect x="322.5" y="218.5" width="4" height="11.0" fill="#000" stroke="#4fd84f" stroke-width="1"/><path d="M332.5 216.0 V228.0" stroke="#4fd84f" stroke-width="1"/><rect x="330.5" y="218.5" width="4" height="4.0" fill="url(#wb)" stroke="#4fd84f" stroke-width="1"/><path d="M340.5 200.0 V223.0" stroke="#4fd84f" stroke-width="1"/><rect x="338.5" y="202.5" width="4" height="19.0" fill="#000" stroke="#4fd84f" stroke-width="1"/><path d="M348.5 198.0 V220.0" stroke="#4fd84f" stroke-width="1"/><rect x="346.5" y="198.5" width="4" height="21.0" fill="url(#wb)" stroke="#4fd84f" stroke-width="1"/><path d="M356.5 214.0 V230.0" stroke="#4fd84f" stroke-width="1"/><rect x="354.5" y="218.5" width="4" height="7.0" fill="url(#wb)" stroke="#4fd84f" stroke-width="1"/><path d="M364.5 204.0 V231.0" stroke="#4fd84f" stroke-width="1"/><rect x="362.5" y="204.5" width="4" height="21.0" fill="#000" stroke="#4fd84f" stroke-width="1"/><path d="M372.5 202.0 V218.0" stroke="#4fd84f" stroke-width="1"/><rect x="370.5" y="204.5" width="4" height="12.0" fill="url(#wb)" stroke="#4fd84f" stroke-width="1"/><path d="M380.5 210.0 V218.0" stroke="#4fd84f" stroke-width="1"/><path d="M378 215.5 H383" stroke="#4fd84f" stroke-width="1"/><path d="M388.5 211.0 V227.0" stroke="#4fd84f" stroke-width="1"/><path d="M386 215.5 H391" stroke="#4fd84f" stroke-width="1"/><path d="M396.5 190.0 V220.0" stroke="#4fd84f" stroke-width="1"/><rect x="394.5" y="190.5" width="4" height="26.0" fill="#000" stroke="#4fd84f" stroke-width="1"/><path d="M404.5 143.0 V216.0" stroke="#4fd84f" stroke-width="1"/><rect x="402.5" y="153.5" width="4" height="38.0" fill="#000" stroke="#4fd84f" stroke-width="1"/><path d="M412.5 147.0 V198.0" stroke="#4fd84f" stroke-width="1"/><rect x="410.5" y="154.5" width="4" height="39.0" fill="url(#wb)" stroke="#4fd84f" stroke-width="1"/><path d="M420.5 181.0 V222.0" stroke="#4fd84f" stroke-width="1"/><rect x="418.5" y="192.5" width="4" height="27.0" fill="url(#wb)" stroke="#4fd84f" stroke-width="1"/><path d="M428.5 220.0 V260.0" stroke="#4fd84f" stroke-width="1"/><rect x="426.5" y="231.5" width="4" height="10.0" fill="url(#wb)" stroke="#4fd84f" stroke-width="1"/><path d="M436.5 226.0 V256.0" stroke="#4fd84f" stroke-width="1"/><rect x="434.5" y="231.5" width="4" height="10.0" fill="#000" stroke="#4fd84f" stroke-width="1"/><path d="M444.5 212.0 V264.0" stroke="#4fd84f" stroke-width="1"/><rect x="442.5" y="231.5" width="4" height="4.0" fill="url(#wb)" stroke="#4fd84f" stroke-width="1"/><path d="M452.5 213.0 V241.0" stroke="#4fd84f" stroke-width="1"/><path d="M450 226.5 H455" stroke="#4fd84f" stroke-width="1"/><path d="M460.5 158.0 V239.0" stroke="#4fd84f" stroke-width="1"/><rect x="458.5" y="204.5" width="4" height="30.0" fill="#000" stroke="#4fd84f" stroke-width="1"/><path d="M468.5 187.0 V212.0" stroke="#4fd84f" stroke-width="1"/><rect x="466.5" y="202.5" width="4" height="3.0" fill="url(#wb)" stroke="#4fd84f" stroke-width="1"/><path d="M476.5 194.0 V223.0" stroke="#4fd84f" stroke-width="1"/><rect x="474.5" y="194.5" width="4" height="9.0" fill="#000" stroke="#4fd84f" stroke-width="1"/><path d="M484.5 186.0 V204.0" stroke="#4fd84f" stroke-width="1"/><rect x="482.5" y="194.5" width="4" height="7.0" fill="url(#wb)" stroke="#4fd84f" stroke-width="1"/><path d="M492.5 185.0 V203.0" stroke="#4fd84f" stroke-width="1"/><rect x="490.5" y="187.5" width="4" height="14.0" fill="#000" stroke="#4fd84f" stroke-width="1"/><path d="M500.5 182.0 V195.0" stroke="#4fd84f" stroke-width="1"/><rect x="498.5" y="187.5" width="4" height="3.0" fill="url(#wb)" stroke="#4fd84f" stroke-width="1"/><path d="M508.5 182.0 V239.0" stroke="#4fd84f" stroke-width="1"/><rect x="506.5" y="189.5" width="4" height="40.0" fill="url(#wb)" stroke="#4fd84f" stroke-width="1"/><path d="M516.5 219.0 V298.0" stroke="#4fd84f" stroke-width="1"/><rect x="514.5" y="231.5" width="4" height="46.0" fill="url(#wb)" stroke="#4fd84f" stroke-width="1"/><path d="M524.5 273.0 V305.0" stroke="#4fd84f" stroke-width="1"/><rect x="522.5" y="277.5" width="4" height="19.0" fill="url(#wb)" stroke="#4fd84f" stroke-width="1"/><path d="M532.5 274.0 V299.0" stroke="#4fd84f" stroke-width="1"/><rect x="530.5" y="276.5" width="4" height="20.0" fill="#000" stroke="#4fd84f" stroke-width="1"/><path d="M540.5 237.0 V273.0" stroke="#4fd84f" stroke-width="1"/><rect x="538.5" y="251.5" width="4" height="19.0" fill="#000" stroke="#4fd84f" stroke-width="1"/><path d="M548.5 243.0 V271.0" stroke="#4fd84f" stroke-width="1"/><rect x="546.5" y="250.5" width="4" height="16.0" fill="url(#wb)" stroke="#4fd84f" stroke-width="1"/><path d="M556.5 251.0 V278.0" stroke="#4fd84f" stroke-width="1"/><rect x="554.5" y="252.5" width="4" height="14.0" fill="#000" stroke="#4fd84f" stroke-width="1"/><path d="M564.5 246.0 V273.0" stroke="#4fd84f" stroke-width="1"/><rect x="562.5" y="253.5" width="4" height="9.0" fill="url(#wb)" stroke="#4fd84f" stroke-width="1"/><path d="M572.5 248.0 V295.0" stroke="#4fd84f" stroke-width="1"/><rect x="570.5" y="261.5" width="4" height="25.0" fill="url(#wb)" stroke="#4fd84f" stroke-width="1"/><path d="M580.5 279.0 V301.0" stroke="#4fd84f" stroke-width="1"/><path d="M578 287.5 H583" stroke="#4fd84f" stroke-width="1"/><path d="M588.5 284.0 V335.0" stroke="#4fd84f" stroke-width="1"/><rect x="586.5" y="288.5" width="4" height="23.0" fill="url(#wb)" stroke="#4fd84f" stroke-width="1"/><path d="M596.5 283.0 V341.0" stroke="#4fd84f" stroke-width="1"/><rect x="594.5" y="289.5" width="4" height="22.0" fill="#000" stroke="#4fd84f" stroke-width="1"/><path d="M604.5 232.0 V311.0" stroke="#4fd84f" stroke-width="1"/><rect x="602.5" y="245.5" width="4" height="43.0" fill="#000" stroke="#4fd84f" stroke-width="1"/><path d="M612.5 180.0 V249.0" stroke="#4fd84f" stroke-width="1"/><rect x="610.5" y="213.5" width="4" height="32.0" fill="#000" stroke="#4fd84f" stroke-width="1"/><path d="M620.5 184.0 V227.0" stroke="#4fd84f" stroke-width="1"/><path d="M618 214.5 H623" stroke="#4fd84f" stroke-width="1"/><path d="M628.5 184.0 V226.0" stroke="#4fd84f" stroke-width="1"/><rect x="626.5" y="202.5" width="4" height="12.0" fill="#000" stroke="#4fd84f" stroke-width="1"/><path d="M636.5 129.0 V213.0" stroke="#4fd84f" stroke-width="1"/><rect x="634.5" y="151.5" width="4" height="51.0" fill="#000" stroke="#4fd84f" stroke-width="1"/><path d="M644.5 143.0 V184.0" stroke="#4fd84f" stroke-width="1"/><rect x="642.5" y="151.5" width="4" height="15.0" fill="url(#wb)" stroke="#4fd84f" stroke-width="1"/><path d="M652.5 146.0 V182.0" stroke="#4fd84f" stroke-width="1"/><rect x="650.5" y="148.5" width="4" height="18.0" fill="#000" stroke="#4fd84f" stroke-width="1"/><path d="M660.5 147.0 V175.0" stroke="#4fd84f" stroke-width="1"/><rect x="658.5" y="148.5" width="4" height="25.0" fill="url(#wb)" stroke="#4fd84f" stroke-width="1"/><path d="M668.5 155.0 V173.0" stroke="#4fd84f" stroke-width="1"/><rect x="666.5" y="155.5" width="4" height="17.0" fill="#000" stroke="#4fd84f" stroke-width="1"/><path d="M676.5 135.0 V159.0" stroke="#4fd84f" stroke-width="1"/><rect x="674.5" y="152.5" width="4" height="4.0" fill="#000" stroke="#4fd84f" stroke-width="1"/><path d="M684.5 148.0 V162.0" stroke="#4fd84f" stroke-width="1"/><rect x="682.5" y="149.5" width="4" height="3.0" fill="#000" stroke="#4fd84f" stroke-width="1"/><path d="M692.5 149.0 V193.0" stroke="#4fd84f" stroke-width="1"/><rect x="690.5" y="149.5" width="4" height="43.0" fill="url(#wb)" stroke="#4fd84f" stroke-width="1"/><path d="M700.5 160.0 V195.0" stroke="#4fd84f" stroke-width="1"/><rect x="698.5" y="168.5" width="4" height="24.0" fill="#000" stroke="#4fd84f" stroke-width="1"/><path d="M708.5 183.0 V196.0" stroke="#4fd84f" stroke-width="1"/><rect x="706.5" y="186.5" width="4" height="5.0" fill="#000" stroke="#4fd84f" stroke-width="1"/><path d="M716.5 173.0 V192.0" stroke="#4fd84f" stroke-width="1"/><rect x="714.5" y="186.5" width="4" height="3.0" fill="url(#wb)" stroke="#4fd84f" stroke-width="1"/><path d="M724.5 180.0 V195.0" stroke="#4fd84f" stroke-width="1"/><path d="M722 187.5 H727" stroke="#4fd84f" stroke-width="1"/><path d="M732.5 188.0 V205.0" stroke="#4fd84f" stroke-width="1"/><rect x="730.5" y="189.5" width="4" height="6.0" fill="url(#wb)" stroke="#4fd84f" stroke-width="1"/><path d="M740.5 188.0 V201.0" stroke="#4fd84f" stroke-width="1"/><rect x="738.5" y="193.5" width="4" height="3.0" fill="#000" stroke="#4fd84f" stroke-width="1"/><path d="M748.5 178.0 V195.0" stroke="#4fd84f" stroke-width="1"/><rect x="746.5" y="187.5" width="4" height="7.0" fill="#000" stroke="#4fd84f" stroke-width="1"/><path d="M756.5 170.0 V192.0" stroke="#4fd84f" stroke-width="1"/><rect x="754.5" y="172.5" width="4" height="15.0" fill="#000" stroke="#4fd84f" stroke-width="1"/><path d="M764.5 163.0 V177.0" stroke="#4fd84f" stroke-width="1"/><rect x="762.5" y="168.5" width="4" height="4.0" fill="#000" stroke="#4fd84f" stroke-width="1"/><path d="M772.5 159.0 V175.0" stroke="#4fd84f" stroke-width="1"/><rect x="770.5" y="165.5" width="4" height="5.0" fill="#000" stroke="#4fd84f" stroke-width="1"/><path d="M780.5 141.0 V174.0" stroke="#4fd84f" stroke-width="1"/><rect x="778.5" y="159.5" width="4" height="6.0" fill="#000" stroke="#4fd84f" stroke-width="1"/><path d="M788.5 136.0 V193.0" stroke="#4fd84f" stroke-width="1"/><rect x="786.5" y="160.5" width="4" height="29.0" fill="url(#wb)" stroke="#4fd84f" stroke-width="1"/><path d="M796.5 175.0 V205.0" stroke="#4fd84f" stroke-width="1"/><rect x="794.5" y="185.5" width="4" height="5.0" fill="#000" stroke="#4fd84f" stroke-width="1"/><path d="M804.5 180.0 V213.0" stroke="#4fd84f" stroke-width="1"/><rect x="802.5" y="188.5" width="4" height="18.0" fill="url(#wb)" stroke="#4fd84f" stroke-width="1"/><path d="M812.5 206.0 V245.0" stroke="#4fd84f" stroke-width="1"/><rect x="810.5" y="206.5" width="4" height="19.0" fill="url(#wb)" stroke="#4fd84f" stroke-width="1"/><path d="M820.5 214.0 V235.0" stroke="#4fd84f" stroke-width="1"/><path d="M818 225.5 H823" stroke="#4fd84f" stroke-width="1"/><path d="M828.5 206.0 V243.0" stroke="#4fd84f" stroke-width="1"/><rect x="826.5" y="211.5" width="4" height="13.0" fill="#000" stroke="#4fd84f" stroke-width="1"/><path d="M836.5 196.0 V223.0" stroke="#4fd84f" stroke-width="1"/><rect x="834.5" y="204.5" width="4" height="7.0" fill="#000" stroke="#4fd84f" stroke-width="1"/><path d="M844.5 181.0 V209.0" stroke="#4fd84f" stroke-width="1"/><rect x="842.5" y="194.5" width="4" height="11.0" fill="#000" stroke="#4fd84f" stroke-width="1"/><path d="M852.5 194.0 V212.0" stroke="#4fd84f" stroke-width="1"/><rect x="850.5" y="194.5" width="4" height="14.0" fill="url(#wb)" stroke="#4fd84f" stroke-width="1"/><path d="M860.5 202.0 V218.0" stroke="#4fd84f" stroke-width="1"/><rect x="858.5" y="206.5" width="4" height="2.0" fill="#000" stroke="#4fd84f" stroke-width="1"/><path d="M868.5 198.0 V216.0" stroke="#4fd84f" stroke-width="1"/><rect x="866.5" y="199.5" width="4" height="8.0" fill="#000" stroke="#4fd84f" stroke-width="1"/><path d="M876.5 178.0 V204.0" stroke="#4fd84f" stroke-width="1"/><rect x="874.5" y="188.5" width="4" height="11.0" fill="#000" stroke="#4fd84f" stroke-width="1"/><path d="M884.5 181.0 V196.0" stroke="#4fd84f" stroke-width="1"/><path d="M882 190.5 H887" stroke="#4fd84f" stroke-width="1"/><path d="M892.5 183.0 V196.0" stroke="#4fd84f" stroke-width="1"/><rect x="890.5" y="188.5" width="4" height="3.0" fill="#000" stroke="#4fd84f" stroke-width="1"/><path d="M900.5 181.0 V192.0" stroke="#4fd84f" stroke-width="1"/><rect x="898.5" y="183.5" width="4" height="7.0" fill="#000" stroke="#4fd84f" stroke-width="1"/><path d="M908.5 180.0 V188.0" stroke="#4fd84f" stroke-width="1"/><path d="M906 182.5 H911" stroke="#4fd84f" stroke-width="1"/><path d="M916.5 181.0 V187.0" stroke="#4fd84f" stroke-width="1"/><rect x="914.5" y="182.5" width="4" height="3.0" fill="url(#wb)" stroke="#4fd84f" stroke-width="1"/><path d="M924.5 184.0 V193.0" stroke="#4fd84f" stroke-width="1"/><rect x="922.5" y="186.5" width="4" height="3.0" fill="url(#wb)" stroke="#4fd84f" stroke-width="1"/><path d="M932.5 181.0 V200.0" stroke="#4fd84f" stroke-width="1"/><rect x="930.5" y="183.5" width="4" height="7.0" fill="#000" stroke="#4fd84f" stroke-width="1"/><path d="M940.5 178.0 V184.0" stroke="#4fd84f" stroke-width="1"/><rect x="938.5" y="178.5" width="4" height="5.0" fill="#000" stroke="#4fd84f" stroke-width="1"/><path d="M948.5 176.0 V184.0" stroke="#4fd84f" stroke-width="1"/><path d="M946 179.5 H951" stroke="#4fd84f" stroke-width="1"/><path d="M956.5 148.0 V192.0" stroke="#4fd84f" stroke-width="1"/><rect x="954.5" y="166.5" width="4" height="14.0" fill="#000" stroke="#4fd84f" stroke-width="1"/><path d="M964.5 160.0 V187.0" stroke="#4fd84f" stroke-width="1"/><path d="M962 166.5 H967" stroke="#4fd84f" stroke-width="1"/><path d="M972.5 150.0 V170.0" stroke="#4fd84f" stroke-width="1"/><rect x="970.5" y="157.5" width="4" height="10.0" fill="#000" stroke="#4fd84f" stroke-width="1"/><path d="M980.5 123.0 V170.0" stroke="#4fd84f" stroke-width="1"/><rect x="978.5" y="139.5" width="4" height="19.0" fill="#000" stroke="#4fd84f" stroke-width="1"/><path d="M988.5 115.0 V142.0" stroke="#4fd84f" stroke-width="1"/><rect x="986.5" y="131.5" width="4" height="10.0" fill="#000" stroke="#4fd84f" stroke-width="1"/><path d="M996.5 125.0 V180.0" stroke="#4fd84f" stroke-width="1"/><rect x="994.5" y="130.5" width="4" height="38.0" fill="url(#wb)" stroke="#4fd84f" stroke-width="1"/><path d="M1004.5 155.0 V174.0" stroke="#4fd84f" stroke-width="1"/><rect x="1002.5" y="159.5" width="4" height="9.0" fill="#000" stroke="#4fd84f" stroke-width="1"/><path d="M1012.5 117.0 V166.0" stroke="#4fd84f" stroke-width="1"/><rect x="1010.5" y="133.5" width="4" height="28.0" fill="#000" stroke="#4fd84f" stroke-width="1"/><path d="M1020.5 118.0 V149.0" stroke="#4fd84f" stroke-width="1"/><rect x="1018.5" y="124.5" width="4" height="9.0" fill="#000" stroke="#4fd84f" stroke-width="1"/><path d="M265.5 226 H270.5 V235 L275.5 231 L276 235.5 L268 245 L260 235.5 L260.5 231 L265.5 235 Z" fill="#ff1a1a"/><path d="M273.0 287 H278.0 V296 L283.0 292 L283.5 296.5 L275.5 306 L267.5 296.5 L268.0 292 L273.0 296 Z" fill="#ff1a1a"/><path d="M418.0 190 H423.0 V199 L428.0 195 L428.5 199.5 L420.5 209 L412.5 199.5 L413.0 195 L418.0 199 Z" fill="#ff1a1a"/><path d="M425.0 217 H430.0 V226 L435.0 222 L435.5 226.5 L427.5 236 L419.5 226.5 L420.0 222 L425.0 226 Z" fill="#ff1a1a"/><path d="M448.5 233 H453.5 V242 L458.5 238 L459 242.5 L451 252 L443 242.5 L443.5 238 L448.5 242 Z" fill="#ff1a1a"/><path d="M504.5 187 H509.5 V196 L514.5 192 L515 196.5 L507 206 L499 196.5 L499.5 192 L504.5 196 Z" fill="#ff1a1a"/><path d="M784.5 157 H789.5 V166 L794.5 162 L795 166.5 L787 176 L779 166.5 L779.5 162 L784.5 166 Z" fill="#ff1a1a"/><path d="M800.5 183 H805.5 V192 L810.5 188 L811 192.5 L803 202 L795 192.5 L795.5 188 L800.5 192 Z" fill="#ff1a1a"/><path d="M570.0 285 H575.0 V276 L580.0 280 L580.5 275.5 L572.5 266 L564.5 275.5 L565.0 280 L570.0 276 Z" fill="#1aff1a"/><path d="M594.0 334 H599.0 V325 L604.0 329 L604.5 324.5 L596.5 315 L588.5 324.5 L589.0 329 L594.0 325 Z" fill="#1aff1a"/><path d="M625.5 237 H630.5 V228 L635.5 232 L636 227.5 L628 218 L620 227.5 L620.5 232 L625.5 228 Z" fill="#1aff1a"/><path d="M874.0 223 H879.0 V214 L884.0 218 L884.5 213.5 L876.5 204 L868.5 213.5 L869.0 218 L874.0 214 Z" fill="#1aff1a"/><path d="M905.0 206 H910.0 V197 L915.0 201 L915.5 196.5 L907.5 187 L899.5 196.5 L900.0 201 L905.0 197 Z" fill="#1aff1a"/><path d="M913.5 206 H918.5 V197 L923.5 201 L924 196.5 L916 187 L908 196.5 L908.5 201 L913.5 197 Z" fill="#1aff1a"/><path d="M271 252 H274 V250 L278 254 L274 258 V256 H271 Z" fill="#e82020" stroke="#fff" stroke-width="0.8"/><path d="M792 185 L792 195 L794.5 192.5 L796.5 196.5 L798 195.8 L796 191.8 L799 191.5 Z" fill="#fff" stroke="#000" stroke-width="0.6"/></g><text x="271" y="113">EURUSDm,H1&#160; 1.32678 1.32756 1.32600 1.32725</text><text x="272" y="187.5">#17066255 sell</text><text x="1166" y="114.5">multi-revers</text><circle cx="1222.5" cy="111" r="5.3" fill="none" stroke="#fff" stroke-width="1"/><circle cx="1220.5" cy="109.5" r="0.8"/><circle cx="1224.5" cy="109.5" r="0.8"/><path d="M1219.5 112.5 Q1222.5 115.5 1225.5 112.5" fill="none" stroke="#fff" stroke-width="0.9"/><path d="M1034 102 H1044 L1039 107 Z" fill="#8a8a8a"/><path d="M1234 150.5 H1237" stroke="#fff"/><text x="1239" y="154.0">1.32580</text><path d="M1234 182.5 H1237" stroke="#fff"/><text x="1239" y="186.0">1.32405</text><path d="M1234 214.5 H1237" stroke="#fff"/><text x="1239" y="218.0">1.32235</text><path d="M1234 246.5 H1237" stroke="#fff"/><text x="1239" y="250.0">1.32065</text><path d="M1234 278.5 H1237" stroke="#fff"/><text x="1239" y="282.0">1.31890</text><path d="M1234 310.5 H1237" stroke="#fff"/><text x="1239" y="314.0">1.31720</text><path d="M1234 342.5 H1237" stroke="#fff"/><text x="1239" y="346.0">1.31550</text><text x="1239" y="121">1.32750</text><rect x="1236" y="118" width="37" height="11" fill="#fff"/><text x="1238" y="127" fill="#000">1.32725</text><g clip-path="url(#i1)"><path d="M268 358.5 H1233" stroke="#5cb85c" stroke-dasharray="4 3"/><path d="M268 385.5 H1233" stroke="#5cb85c" stroke-dasharray="4 3"/><path d="M268 413.5 H1233" stroke="#5cb85c" stroke-dasharray="4 3"/><path d="M268 355.5 L387 355.5 C400 356 410 362 427 384 C443 405 452 415.5 466 415.5 L546 415.5 C560 415.5 571 402 582 386 C596 366 608 356 630 355.5 L763 355.5 C776 356 786 364 799 382 C815 404 826 415 843 415.5 L887 415.5 C902 415 913 405 927 388 C941 368 951 356 965 355.5 L1020 355.5" fill="none" stroke="#0c14d8" stroke-width="2.6"/></g><text x="271" y="361">BuySellWait 0.9956</text><text x="1236" y="359">1.2</text><text x="1236" y="362">0.9</text><text x="1236" y="389" font-weight="bold">0.00</text><text x="1236" y="415">-0.9</text><text x="1236" y="419">-1.2</text><path d="M1234 358.5 H1236" stroke="#fff"/><path d="M1234 385.5 H1236" stroke="#fff"/><path d="M1234 413.5 H1236" stroke="#fff"/><g clip-path="url(#i2)"><path d="M268 467.5 H1233" stroke="#c8c8c8" stroke-dasharray="4 3"/><path d="M268 503.5 H1233" stroke="#c8c8c8" stroke-dasharray="4 3"/><path d="M268 496.4 L275.9 489.7 L283.8 496 L291.8 490 L299.7 479.6 L307.7 462.7 L316.6 469 L325.1 469.4 L333 471.6 L341 463.7 L349 467.8 L356.9 476.4 L364.8 471.6 L372.8 471.6 L380.7 474.8 L388.7 478 L396.6 452.6 L404.6 431.3 L414 455.7 L428.4 514.5 L436.3 509.7 L444.3 507.5 L452.2 500.2 L460.2 474.8 L468.1 475.7 L476 478.9 L484 474.8 L491.9 473.2 L499.9 473.2 L507.8 490.7 L515.8 515 L524.3 518.6 L532.6 508.2 L540.2 495.4 L547.5 497 L555.5 496.4 L564.4 493.9 L573 498.6 L580.9 501.8 L588.8 507.2 L596.8 503.4 L604.7 479.6 L612.7 454.1 L620.6 452.6 L628.5 455.7 L636.5 451.9 L644.4 460.5 L654 463 L663.4 468 L669.7 470.3 L676 469.4 L683.75 471.25 L693 479 L701 479 L708.75 487.5 L718 491.6 L726 496.25 L733 505.6 L738.4 504.7 L747.8 495.3 L757 486.9 L764.4 478.75 L772.8 475 L780.6 467.2 L788.4 481.25 L797.8 499 L804 505.6 L811.9 526.6 L821.25 515.6 L829 505.6 L836.9 495.3 L844.7 487.5 L852.5 492.2 L860.3 494.4 L868 490.6 L876.6 480.6 L884.7 476.6 L893 471.9 L901 466.6 L907 465 L915 471 L922.8 473.4 L932.2 475 L940 465.6 L948.75 465.6 L955.6 451.6 L963.4 459.4 L971.25 450 L980.6 444.4 L988.4 446.25 L996.25 471.9 L1004 478 L1012 463.4 L1019.7 461.9" fill="none" stroke="#5f9ea0" stroke-width="1" shape-rendering="crispEdges"/></g><text x="271" y="439.5">CCI(14) 126.1229</text><text x="1236" y="436.5">320.2998</text><text x="1236" y="469.5">100</text><text x="1236" y="487.5">0.00</text><text x="1236" y="505.5">-100</text><text x="1236" y="528.5">-251.307</text><path d="M1234 467.5 H1236" stroke="#fff"/><path d="M1234 485.5 H1236" stroke="#fff"/><path d="M1234 503.5 H1236" stroke="#fff"/><path d="M268.5 532 V535" stroke="#fff"/><text x="267" y="543.5">25 Apr 2012</text><path d="M332.5 532 V535" stroke="#fff"/><text x="331" y="543.5">25 Apr 22:00</text><path d="M396.5 532 V535" stroke="#fff"/><text x="395" y="543.5">26 Apr 06:00</text><path d="M460.5 532 V535" stroke="#fff"/><text x="459" y="543.5">26 Apr 14:00</text><path d="M524.5 532 V535" stroke="#fff"/><text x="523" y="543.5">26 Apr 22:00</text><path d="M588.5 532 V535" stroke="#fff"/><text x="587" y="543.5">27 Apr 06:00</text><path d="M652.5 532 V535" stroke="#fff"/><text x="651" y="543.5">27 Apr 14:00</text><path d="M716.5 532 V535" stroke="#fff"/><text x="715" y="543.5">29 Apr 22:00</text><path d="M780.5 532 V535" stroke="#fff"/><text x="779" y="543.5">30 Apr 06:00</text><path d="M844.5 532 V535" stroke="#fff"/><text x="843" y="543.5">30 Apr 14:00</text><path d="M908.5 532 V535" stroke="#fff"/><text x="907" y="543.5">30 Apr 22:00</text><path d="M972.5 532 V535" stroke="#fff"/><text x="971" y="543.5">1 May 06:00</text></svg>
<div class="a" style="left:265px;top:549px;width:1010px;height:22px;background:#dbe7f2"></div>
<div class="a" style="left:267px;top:550px;width:89px;height:20px;background:#fff;border:1px solid #000;border-top:none"></div>
<div class="t" style="left:277px;top:554px;font-size:10px;color:#000;font-weight:normal;">EURUSDm,H1</div>
<div class="t" style="left:365px;top:554px;font-size:10px;color:#4f82ad;font-weight:normal;">EURJPYm,H1</div>
<div class="a" style="left:439px;top:554px;width:1px;height:13px;background:#6f9cc2"></div>
<div class="t" style="left:450px;top:554px;font-size:10px;color:#4f82ad;font-weight:normal;">CHFJPYm,H1</div>
<div class="a" style="left:524px;top:554px;width:1px;height:13px;background:#6f9cc2"></div>
<div class="t" style="left:533px;top:554px;font-size:10px;color:#4f82ad;font-weight:normal;">CADJPYm,H1</div>
<div class="a" style="left:607px;top:554px;width:1px;height:13px;background:#6f9cc2"></div>
<div class="t" style="left:617px;top:554px;font-size:10px;color:#4f82ad;font-weight:normal;">NOKJPYm,H1</div>
<div class="a" style="left:691px;top:554px;width:1px;height:13px;background:#6f9cc2"></div>
<div class="t" style="left:701px;top:554px;font-size:10px;color:#4f82ad;font-weight:normal;">GBPJPYm,H1</div>
<div class="a" style="left:775px;top:554px;width:1px;height:13px;background:#6f9cc2"></div>
<div class="t" style="left:785px;top:554px;font-size:10px;color:#4f82ad;font-weight:normal;">USDJPYm,H1</div>
<div class="a" style="left:859px;top:554px;width:1px;height:13px;background:#6f9cc2"></div>
<div class="t" style="left:869px;top:554px;font-size:10px;color:#4f82ad;font-weight:normal;">HKDJPYm,H1</div>
<div class="a" style="left:943px;top:554px;width:1px;height:13px;background:#6f9cc2"></div>
<div class="t" style="left:953px;top:554px;font-size:10px;color:#4f82ad;font-weight:normal;">NZDJPYm,H1</div>
<div class="a" style="left:1027px;top:554px;width:1px;height:13px;background:#6f9cc2"></div>
<div class="t" style="left:1036px;top:554px;font-size:10px;color:#4f82ad;font-weight:normal;">AUDJPYm,H1</div>
<div class="a" style="left:1110px;top:554px;width:1px;height:13px;background:#6f9cc2"></div>
<div class="t" style="left:1121px;top:554px;font-size:10px;color:#4f82ad;font-weight:normal;">EURCADm,H1</div>
<div class="a" style="left:1195px;top:554px;width:1px;height:13px;background:#6f9cc2"></div>
<div class="t" style="left:1209px;top:554px;font-size:10px;color:#4f82ad;font-weight:normal;width:32px;overflow:hidden">EURAUDm,H1</div>
<div class="a" style="left:1283px;top:554px;width:1px;height:13px;background:#6f9cc2"></div>
<svg style="left:1244px;top:555px" width="26" height="12"><path d="M6 3 L2 6 L6 9 Z" fill="#9fb4c8"/><path d="M19 2 L24 6 L19 10 Z" fill="#000"/></svg>
<div class="a" style="left:5px;top:571px;width:1270px;height:174px;background:#e8f0f8"></div>
<div class="a" style="left:5px;top:570px;width:1270px;height:1px;background:#c6dcec"></div>
<div class="t" style="left:9px;top:574px;font-size:12px;color:#000;font-weight:bold;">×</div>
<div class="a" style="left:6px;top:589px;width:13px;height:152px;background:#4a7fa8"></div>
<div class="t" style="left:-17.5px;top:708px;width:60px;transform:rotate(-90deg);color:#dbe8f3;font-size:11px;text-align:center">Терминал</div>
<div class="a" style="left:20px;top:576px;width:1225px;height:17px;background:linear-gradient(#f4f9fd,#cde1f2);border-top:1px solid #b5d0e6;border-bottom:1px solid #b5d0e6"></div>
<div class="a" style="left:20px;top:576px;width:1px;height:17px;background:#b5d0e6"></div>
<div class="a" style="left:21px;top:576px;width:1px;height:17px;background:#fafcfe"></div>
<div class="t" style="left:27px;top:578px;font-size:11px;color:#000;font-weight:normal;">Ордер</div>
<div class="a" style="left:119px;top:576px;width:1px;height:17px;background:#b5d0e6"></div>
<div class="a" style="left:120px;top:576px;width:1px;height:17px;background:#fafcfe"></div>
<div class="t" style="right:1000px;top:578px;font-size:11px;color:#000;font-weight:normal;">Время</div>
<div class="a" style="left:286px;top:576px;width:1px;height:17px;background:#b5d0e6"></div>
<div class="a" style="left:287px;top:576px;width:1px;height:17px;background:#fafcfe"></div>
<div class="t" style="right:933px;top:578px;font-size:11px;color:#000;font-weight:normal;">Тип</div>
<div class="a" style="left:353px;top:576px;width:1px;height:17px;background:#b5d0e6"></div>
<div class="a" style="left:354px;top:576px;width:1px;height:17px;background:#fafcfe"></div>
<div class="t" style="right:880px;top:578px;font-size:11px;color:#000;font-weight:normal;">Объём</div>
<div class="a" style="left:406px;top:576px;width:1px;height:17px;background:#b5d0e6"></div>
<div class="a" style="left:407px;top:576px;width:1px;height:17px;background:#fafcfe"></div>
<div class="t" style="right:812px;top:578px;font-size:11px;color:#000;font-weight:normal;">Символ</div>
<div class="a" style="left:474px;top:576px;width:1px;height:17px;background:#b5d0e6"></div>
<div class="a" style="left:475px;top:576px;width:1px;height:17px;background:#fafcfe"></div>
<div class="t" style="right:735px;top:578px;font-size:11px;color:#000;font-weight:normal;">Цена</div>
<div class="a" style="left:551px;top:576px;width:1px;height:17px;background:#b5d0e6"></div>
<div class="a" style="left:552px;top:576px;width:1px;height:17px;background:#fafcfe"></div>
<div class="t" style="right:659px;top:578px;font-size:11px;color:#000;font-weight:normal;">S / L</div>
<div class="a" style="left:627px;top:576px;width:1px;height:17px;background:#b5d0e6"></div>
<div class="a" style="left:628px;top:576px;width:1px;height:17px;background:#fafcfe"></div>
<div class="t" style="right:583px;top:578px;font-size:11px;color:#000;font-weight:normal;">T / P</div>
<div class="a" style="left:703px;top:576px;width:1px;height:17px;background:#b5d0e6"></div>
<div class="a" style="left:704px;top:576px;width:1px;height:17px;background:#fafcfe"></div>
<div class="t" style="right:507px;top:578px;font-size:11px;color:#000;font-weight:normal;">Цена</div>
<div class="a" style="left:779px;top:576px;width:1px;height:17px;background:#b5d0e6"></div>
<div class="a" style="left:780px;top:576px;width:1px;height:17px;background:#fafcfe"></div>
<div class="t" style="right:431px;top:578px;font-size:11px;color:#000;font-weight:normal;">Комиссия</div>
<div class="a" style="left:855px;top:576px;width:1px;height:17px;background:#b5d0e6"></div>
<div class="a" style="left:856px;top:576px;width:1px;height:17px;background:#fafcfe"></div>
<div class="t" style="right:355px;top:578px;font-size:11px;color:#000;font-weight:normal;">Своп</div>
<div class="a" style="left:931px;top:576px;width:1px;height:17px;background:#b5d0e6"></div>
<div class="a" style="left:932px;top:576px;width:1px;height:17px;background:#fafcfe"></div>
<div class="t" style="left:943px;top:578px;font-size:11px;color:#000;font-weight:normal;">Прибы...</div>
<div class="a" style="left:1013px;top:576px;width:1px;height:17px;background:#b5d0e6"></div>
<div class="a" style="left:1014px;top:576px;width:1px;height:17px;background:#fafcfe"></div>
<div class="t" style="right:41px;top:578px;font-size:11px;color:#000;font-weight:normal;">Комментарий</div>
<div class="t" style="left:1000px;top:577px;font-size:10px;color:#9ab;font-weight:normal;">△</div>
<div class="a" style="left:20px;top:593px;width:1225px;height:20px;background:#ececec;border-bottom:1px solid #d6d6d6"></div>
<div class="a" style="left:117px;top:593px;width:1px;height:20px;background:#d6d6d6"></div>
<div class="a" style="left:284px;top:593px;width:1px;height:20px;background:#d6d6d6"></div>
<div class="a" style="left:351px;top:593px;width:1px;height:20px;background:#d6d6d6"></div>
<div class="a" style="left:404px;top:593px;width:1px;height:20px;background:#d6d6d6"></div>
<div class="a" style="left:472px;top:593px;width:1px;height:20px;background:#d6d6d6"></div>
<div class="a" style="left:549px;top:593px;width:1px;height:20px;background:#d6d6d6"></div>
<div class="a" style="left:625px;top:593px;width:1px;height:20px;background:#d6d6d6"></div>
<div class="a" style="left:701px;top:593px;width:1px;height:20px;background:#d6d6d6"></div>
<div class="a" style="left:777px;top:593px;width:1px;height:20px;background:#d6d6d6"></div>
<div class="a" style="left:853px;top:593px;width:1px;height:20px;background:#d6d6d6"></div>
<div class="a" style="left:929px;top:593px;width:1px;height:20px;background:#d6d6d6"></div>
<div class="a" style="left:1011px;top:593px;width:1px;height:20px;background:#d6d6d6"></div>
<div class="t" style="left:45px;top:597px;font-size:11px;color:#000;font-weight:normal;">17056699</div>
<div class="t" style="right:998px;top:597px;font-size:11px;color:#000;font-weight:normal;">2012.04.30 05:40</div>
<div class="t" style="right:931px;top:597px;font-size:11px;color:#000;font-weight:normal;">buy</div>
<div class="t" style="right:878px;top:597px;font-size:11px;color:#000;font-weight:normal;">0.01</div>
<div class="t" style="right:810px;top:597px;font-size:11px;color:#000;font-weight:normal;">eurcadm</div>
<div class="t" style="right:733px;top:597px;font-size:11px;color:#000;font-weight:normal;">1.30007</div>
<div class="t" style="right:657px;top:597px;font-size:11px;color:#000;font-weight:normal;">0.00000</div>
<div class="t" style="right:581px;top:597px;font-size:11px;color:#000;font-weight:normal;">0.00000</div>
<div class="t" style="right:505px;top:597px;font-size:11px;color:#000;font-weight:normal;">1.31193</div>
<div class="t" style="right:429px;top:597px;font-size:11px;color:#000;font-weight:normal;">0.00</div>
<div class="t" style="right:353px;top:597px;font-size:11px;color:#000;font-weight:normal;">-0.01</div>
<div class="t" style="right:271px;top:597px;font-size:11px;color:#000;font-weight:normal;">12.00</div>
<div class="t" style="right:39px;top:597px;font-size:11px;color:#000;font-weight:normal;">Revers</div>
<svg style="left:24px;top:596px" width="14" height="15"><path d="M0.5 0.5 L7.5 0.5 L10.5 3.5 L10.5 12.5 L0.5 12.5 Z" fill="#f8f8f8" stroke="#666"/><circle cx="10.5" cy="11.5" r="3.2" fill="#3a9ac8" stroke="#345" stroke-width="0.6"/></svg>
<div class="a" style="left:20px;top:613px;width:1225px;height:20px;background:#ffffff;border-bottom:1px solid #d6d6d6"></div>
<div class="a" style="left:117px;top:613px;width:1px;height:20px;background:#d6d6d6"></div>
<div class="a" style="left:284px;top:613px;width:1px;height:20px;background:#d6d6d6"></div>
<div class="a" style="left:351px;top:613px;width:1px;height:20px;background:#d6d6d6"></div>
<div class="a" style="left:404px;top:613px;width:1px;height:20px;background:#d6d6d6"></div>
<div class="a" style="left:472px;top:613px;width:1px;height:20px;background:#d6d6d6"></div>
<div class="a" style="left:549px;top:613px;width:1px;height:20px;background:#d6d6d6"></div>
<div class="a" style="left:625px;top:613px;width:1px;height:20px;background:#d6d6d6"></div>
<div class="a" style="left:701px;top:613px;width:1px;height:20px;background:#d6d6d6"></div>
<div class="a" style="left:777px;top:613px;width:1px;height:20px;background:#d6d6d6"></div>
<div class="a" style="left:853px;top:613px;width:1px;height:20px;background:#d6d6d6"></div>
<div class="a" style="left:929px;top:613px;width:1px;height:20px;background:#d6d6d6"></div>
<div class="a" style="left:1011px;top:613px;width:1px;height:20px;background:#d6d6d6"></div>
<div class="t" style="left:45px;top:617px;font-size:11px;color:#000;font-weight:normal;">17053411</div>
<div class="t" style="right:998px;top:617px;font-size:11px;color:#000;font-weight:normal;">2012.04.30 03:51</div>
<div class="t" style="right:931px;top:617px;font-size:11px;color:#000;font-weight:normal;">buy</div>
<div class="t" style="right:878px;top:617px;font-size:11px;color:#000;font-weight:normal;">0.01</div>
<div class="t" style="right:810px;top:617px;font-size:11px;color:#000;font-weight:normal;">gbpaudm</div>
<div class="t" style="right:733px;top:617px;font-size:11px;color:#000;font-weight:normal;">1.55809</div>
<div class="t" style="right:657px;top:617px;font-size:11px;color:#000;font-weight:normal;">0.00000</div>
<div class="t" style="right:581px;top:617px;font-size:11px;color:#000;font-weight:normal;">0.00000</div>
<div class="t" style="right:505px;top:617px;font-size:11px;color:#000;font-weight:normal;">1.57112</div>
<div class="t" style="right:429px;top:617px;font-size:11px;color:#000;font-weight:normal;">0.00</div>
<div class="t" style="right:353px;top:617px;font-size:11px;color:#000;font-weight:normal;">-0.10</div>
<div class="t" style="right:271px;top:617px;font-size:11px;color:#000;font-weight:normal;">13.46</div>
<div class="t" style="right:39px;top:617px;font-size:11px;color:#000;font-weight:normal;">Revers</div>
<svg style="left:24px;top:616px" width="14" height="15"><path d="M0.5 0.5 L7.5 0.5 L10.5 3.5 L10.5 12.5 L0.5 12.5 Z" fill="#f8f8f8" stroke="#666"/><circle cx="10.5" cy="11.5" r="3.2" fill="#3a9ac8" stroke="#345" stroke-width="0.6"/></svg>
<div class="a" style="left:20px;top:633px;width:1225px;height:20px;background:#ececec;border-bottom:1px solid #d6d6d6"></div>
<div class="a" style="left:117px;top:633px;width:1px;height:20px;background:#d6d6d6"></div>
<div class="a" style="left:284px;top:633px;width:1px;height:20px;background:#d6d6d6"></div>
<div class="a" style="left:351px;top:633px;width:1px;height:20px;background:#d6d6d6"></div>
<div class="a" style="left:404px;top:633px;width:1px;height:20px;background:#d6d6d6"></div>
<div class="a" style="left:472px;top:633px;width:1px;height:20px;background:#d6d6d6"></div>
<div class="a" style="left:549px;top:633px;width:1px;height:20px;background:#d6d6d6"></div>
<div class="a" style="left:625px;top:633px;width:1px;height:20px;background:#d6d6d6"></div>
<div class="a" style="left:701px;top:633px;width:1px;height:20px;background:#d6d6d6"></div>
<div class="a" style="left:777px;top:633px;width:1px;height:20px;background:#d6d6d6"></div>
<div class="a" style="left:853px;top:633px;width:1px;height:20px;background:#d6d6d6"></div>
<div class="a" style="left:929px;top:633px;width:1px;height:20px;background:#d6d6d6"></div>
<div class="a" style="left:1011px;top:633px;width:1px;height:20px;background:#d6d6d6"></div>
<div class="t" style="left:45px;top:637px;font-size:11px;color:#000;font-weight:normal;">17058906</div>
<div class="t" style="right:998px;top:637px;font-size:11px;color:#000;font-weight:normal;">2012.04.30 06:20</div>
<div class="t" style="right:931px;top:637px;font-size:11px;color:#000;font-weight:normal;">sell</div>
<div class="t" style="right:878px;top:637px;font-size:11px;color:#000;font-weight:normal;">0.01</div>
<div class="t" style="right:810px;top:637px;font-size:11px;color:#000;font-weight:normal;">audchfm</div>
<div class="t" style="right:733px;top:637px;font-size:11px;color:#000;font-weight:normal;">0.94723</div>
<div class="t" style="right:657px;top:637px;font-size:11px;color:#000;font-weight:normal;">0.00000</div>
<div class="t" style="right:581px;top:637px;font-size:11px;color:#000;font-weight:normal;">0.00000</div>
<div class="t" style="right:505px;top:637px;font-size:11px;color:#000;font-weight:normal;">0.93486</div>
<div class="t" style="right:429px;top:637px;font-size:11px;color:#000;font-weight:normal;">0.00</div>
<div class="t" style="right:353px;top:637px;font-size:11px;color:#000;font-weight:normal;">-0.08</div>
<div class="t" style="right:271px;top:637px;font-size:11px;color:#000;font-weight:normal;">13.66</div>
<div class="t" style="right:39px;top:637px;font-size:11px;color:#000;font-weight:normal;">Revers</div>
<svg style="left:24px;top:636px" width="14" height="15"><path d="M0.5 0.5 L7.5 0.5 L10.5 3.5 L10.5 12.5 L0.5 12.5 Z" fill="#f8f8f8" stroke="#666"/><circle cx="10.5" cy="11.5" r="3.2" fill="#e8501a" stroke="#345" stroke-width="0.6"/></svg>
<div class="a" style="left:20px;top:653px;width:1225px;height:20px;background:#ffffff;border-bottom:1px solid #d6d6d6"></div>
<div class="a" style="left:117px;top:653px;width:1px;height:20px;background:#d6d6d6"></div>
<div class="a" style="left:284px;top:653px;width:1px;height:20px;background:#d6d6d6"></div>
<div class="a" style="left:351px;top:653px;width:1px;height:20px;background:#d6d6d6"></div>
<div class="a" style="left:404px;top:653px;width:1px;height:20px;background:#d6d6d6"></div>
<div class="a" style="left:472px;top:653px;width:1px;height:20px;background:#d6d6d6"></div>
<div class="a" style="left:549px;top:653px;width:1px;height:20px;background:#d6d6d6"></div>
<div class="a" style="left:625px;top:653px;width:1px;height:20px;background:#d6d6d6"></div>
<div class="a" style="left:701px;top:653px;width:1px;height:20px;background:#d6d6d6"></div>
<div class="a" style="left:777px;top:653px;width:1px;height:20px;background:#d6d6d6"></div>
<div class="a" style="left:853px;top:653px;width:1px;height:20px;background:#d6d6d6"></div>
<div class="a" style="left:929px;top:653px;width:1px;height:20px;background:#d6d6d6"></div>
<div class="a" style="left:1011px;top:653px;width:1px;height:20px;background:#d6d6d6"></div>
<div class="t" style="left:45px;top:657px;font-size:11px;color:#000;font-weight:normal;">17078708</div>
<div class="t" style="right:998px;top:657px;font-size:11px;color:#000;font-weight:normal;">2012.04.30 11:01</div>
<div class="t" style="right:931px;top:657px;font-size:11px;color:#000;font-weight:normal;">buy</div>
<div class="t" style="right:878px;top:657px;font-size:11px;color:#000;font-weight:normal;">0.01</div>
<div class="t" style="right:810px;top:657px;font-size:11px;color:#000;font-weight:normal;">eurnzdm</div>
<div class="t" style="right:733px;top:657px;font-size:11px;color:#000;font-weight:normal;">1.61218</div>
<div class="t" style="right:657px;top:657px;font-size:11px;color:#000;font-weight:normal;">0.00000</div>
<div class="t" style="right:581px;top:657px;font-size:11px;color:#000;font-weight:normal;">0.00000</div>
<div class="t" style="right:505px;top:657px;font-size:11px;color:#000;font-weight:normal;">1.63032</div>
<div class="t" style="right:429px;top:657px;font-size:11px;color:#000;font-weight:normal;">0.00</div>
<div class="t" style="right:353px;top:657px;font-size:11px;color:#000;font-weight:normal;">-0.06</div>
<div class="t" style="right:271px;top:657px;font-size:11px;color:#000;font-weight:normal;">14.77</div>
<div class="t" style="right:39px;top:657px;font-size:11px;color:#000;font-weight:normal;">Revers</div>
<svg style="left:24px;top:656px" width="14" height="15"><path d="M0.5 0.5 L7.5 0.5 L10.5 3.5 L10.5 12.5 L0.5 12.5 Z" fill="#f8f8f8" stroke="#666"/><circle cx="10.5" cy="11.5" r="3.2" fill="#3a9ac8" stroke="#345" stroke-width="0.6"/></svg>
<div class="a" style="left:20px;top:673px;width:1225px;height:20px;background:#ececec;border-bottom:1px solid #d6d6d6"></div>
<div class="a" style="left:117px;top:673px;width:1px;height:20px;background:#d6d6d6"></div>
<div class="a" style="left:284px;top:673px;width:1px;height:20px;background:#d6d6d6"></div>
<div class="a" style="left:351px;top:673px;width:1px;height:20px;background:#d6d6d6"></div>
<div class="a" style="left:404px;top:673px;width:1px;height:20px;background:#d6d6d6"></div>
<div class="a" style="left:472px;top:673px;width:1px;height:20px;background:#d6d6d6"></div>
<div class="a" style="left:549px;top:673px;width:1px;height:20px;background:#d6d6d6"></div>
<div class="a" style="left:625px;top:673px;width:1px;height:20px;background:#d6d6d6"></div>
<div class="a" style="left:701px;top:673px;width:1px;height:20px;background:#d6d6d6"></div>
<div class="a" style="left:777px;top:673px;width:1px;height:20px;background:#d6d6d6"></div>
<div class="a" style="left:853px;top:673px;width:1px;height:20px;background:#d6d6d6"></div>
<div class="a" style="left:929px;top:673px;width:1px;height:20px;background:#d6d6d6"></div>
<div class="a" style="left:1011px;top:673px;width:1px;height:20px;background:#d6d6d6"></div>
<div class="t" style="left:45px;top:677px;font-size:11px;color:#000;font-weight:normal;">17058557</div>
<div class="t" style="right:998px;top:677px;font-size:11px;color:#000;font-weight:normal;">2012.04.30 06:13</div>
<div class="t" style="right:931px;top:677px;font-size:11px;color:#000;font-weight:normal;">buy</div>
<div class="t" style="right:878px;top:677px;font-size:11px;color:#000;font-weight:normal;">0.01</div>
<div class="t" style="right:810px;top:677px;font-size:11px;color:#000;font-weight:normal;">euraudm</div>
<div class="t" style="right:733px;top:677px;font-size:11px;color:#000;font-weight:normal;">1.26785</div>
<div class="t" style="right:657px;top:677px;font-size:11px;color:#000;font-weight:normal;">0.00000</div>
<div class="t" style="right:581px;top:677px;font-size:11px;color:#000;font-weight:normal;">0.00000</div>
<div class="t" style="right:505px;top:677px;font-size:11px;color:#000;font-weight:normal;">1.28494</div>
<div class="t" style="right:429px;top:677px;font-size:11px;color:#000;font-weight:normal;">0.00</div>
<div class="t" style="right:353px;top:677px;font-size:11px;color:#000;font-weight:normal;">-0.06</div>
<div class="t" style="right:271px;top:677px;font-size:11px;color:#000;font-weight:normal;">17.65</div>
<div class="t" style="right:39px;top:677px;font-size:11px;color:#000;font-weight:normal;">Revers</div>
<svg style="left:24px;top:676px" width="14" height="15"><path d="M0.5 0.5 L7.5 0.5 L10.5 3.5 L10.5 12.5 L0.5 12.5 Z" fill="#f8f8f8" stroke="#666"/><circle cx="10.5" cy="11.5" r="3.2" fill="#3a9ac8" stroke="#345" stroke-width="0.6"/></svg>
<div class="a" style="left:20px;top:693px;width:1225px;height:20px;background:#c8c8c8"></div>
<svg style="left:24px;top:696px" width="14" height="15"><rect x="0.5" y="0.5" width="12" height="13" fill="#f4f4f4" stroke="#777"/><path d="M6.5 3 L10.5 7 L8.5 7 L8.5 11 L4.5 11 L4.5 7 L2.5 7 Z" fill="#22a822"/></svg>
<div class="t" style="left:47px;top:697px;font-size:12px;color:#000;font-weight:bold;letter-spacing:0.2px">Баланс: 267.22&nbsp; Средства: 367.85&nbsp; Залог: 15.20&nbsp; Свободно: 352.65&nbsp; Уровень: 2420.63%</div>
<div class="t" style="right:270px;top:697px;font-size:12px;color:#000;font-weight:bold;">100.63</div>
<div class="a" style="left:20px;top:713px;width:1225px;height:8px;background:#fff"></div>
<div class="a" style="left:1247px;top:577px;width:23px;height:23px;background:linear-gradient(90deg,#f0f0f0,#d8d8d8);border:1px solid #b8b8b8;border-radius:2px"></div>
<svg style="left:1250px;top:581px" width="16" height="14"><path d="M-1 12 H17 V9 H15 V7 H13 V5 H11 V3 H9 V1 H7 V3 H5 V5 H3 V7 H1 V9 H-1 Z" fill="#000"/></svg>
<div class="a" style="left:1247px;top:680px;width:23px;height:15px;background:linear-gradient(90deg,#f0f0f0,#d8d8d8);border:1px solid #b8b8b8;border-radius:2px"></div>
<div class="a" style="left:1247px;top:697px;width:23px;height:23px;background:linear-gradient(90deg,#f0f0f0,#d8d8d8);border:1px solid #b8b8b8;border-radius:2px"></div>
<svg style="left:1250px;top:701px" width="16" height="14"><path d="M-1 1 H17 V4 H15 V6 H13 V8 H11 V10 H9 V12 H7 V10 H5 V8 H3 V6 H1 V4 H-1 Z" fill="#000"/></svg>
<div class="a" style="left:20px;top:721px;width:1250px;height:1px;background:#000"></div>
<div class="a" style="left:22px;top:721px;width:68px;height:18px;background:#fff;border:1px solid #000;border-top:none"></div>
<div class="t" style="left:33px;top:724px;font-size:11px;color:#000;font-weight:normal;">Торговля</div>
<div class="t" style="left:99px;top:724px;font-size:11px;color:#4f82ad;font-weight:normal;">История Счета</div>
<div class="a" style="left:186px;top:724px;width:1px;height:14px;background:#6f9cc2"></div>
<div class="t" style="left:195px;top:724px;font-size:11px;color:#4f82ad;font-weight:normal;">Новости</div>
<div class="a" style="left:248px;top:724px;width:1px;height:14px;background:#6f9cc2"></div>
<div class="t" style="left:257px;top:724px;font-size:11px;color:#4f82ad;font-weight:normal;">Сигналы</div>
<div class="a" style="left:311px;top:724px;width:1px;height:14px;background:#6f9cc2"></div>
<div class="t" style="left:321px;top:724px;font-size:11px;color:#4f82ad;font-weight:normal;">Почтовый ящик</div>
<div class="a" style="left:413px;top:724px;width:1px;height:14px;background:#6f9cc2"></div>
<div class="t" style="left:422px;top:724px;font-size:11px;color:#4f82ad;font-weight:normal;">Эксперты</div>
<div class="a" style="left:483px;top:724px;width:1px;height:14px;background:#6f9cc2"></div>
<div class="t" style="left:492px;top:724px;font-size:11px;color:#4f82ad;font-weight:normal;">Журнал</div>
<div class="a" style="left:544px;top:724px;width:1px;height:14px;background:#6f9cc2"></div>
<div class="a" style="left:5px;top:744px;width:1270px;height:1px;background:#c6dcec"></div>
<div class="a" style="left:5px;top:745px;width:1270px;height:21px;background:#e6eef6"></div>
<div class="t" style="left:8px;top:750px;font-size:11px;color:#000;font-weight:normal;">Для справки, нажмите F1</div>
<div class="a" style="left:562px;top:747px;width:1px;height:18px;background:#b0c8dc"></div>
<div class="a" style="left:668px;top:747px;width:1px;height:18px;background:#b0c8dc"></div>
<div class="a" style="left:770px;top:747px;width:1px;height:18px;background:#b0c8dc"></div>
<div class="a" style="left:840px;top:747px;width:1px;height:18px;background:#b0c8dc"></div>
<div class="a" style="left:910px;top:747px;width:1px;height:18px;background:#b0c8dc"></div>
<div class="a" style="left:978px;top:747px;width:1px;height:18px;background:#b0c8dc"></div>
<div class="a" style="left:1047px;top:747px;width:1px;height:18px;background:#b0c8dc"></div>
<div class="a" style="left:1113px;top:747px;width:1px;height:18px;background:#b0c8dc"></div>
<div class="t" style="left:569px;top:750px;font-size:11px;color:#000;font-weight:normal;">Nur</div>
<svg style="left:1119px;top:751px" width="24" height="12"><rect x="0" y="0" width="2" height="8.7" fill="#3f7010"/><rect x="0" y="9.7" width="2" height="2.1" fill="#8a1800"/><rect x="3" y="0" width="2" height="7.7" fill="#3f7010"/><rect x="3" y="8.7" width="2" height="3.1" fill="#8a1800"/><rect x="6" y="0" width="2" height="6.7" fill="#3f7010"/><rect x="6" y="7.7" width="2" height="4.1" fill="#8a1800"/><rect x="9" y="0" width="2" height="5.7" fill="#3f7010"/><rect x="9" y="6.7" width="2" height="5.1" fill="#8a1800"/><rect x="12" y="0" width="2" height="4.7" fill="#3f7010"/><rect x="12" y="5.7" width="2" height="6.1" fill="#8a1800"/><rect x="15" y="0" width="2" height="3.7" fill="#3f7010"/><rect x="15" y="4.7" width="2" height="7.1" fill="#8a1800"/><rect x="18" y="0" width="2" height="2.7" fill="#3f7010"/><rect x="18" y="3.7" width="2" height="8.1" fill="#8a1800"/><rect x="21" y="0" width="2" height="1.7" fill="#3f7010"/><rect x="21" y="2.7" width="2" height="9.1" fill="#8a1800"/></svg>
<div class="t" style="left:1152px;top:750px;font-size:11px;color:#000;font-weight:normal;">76796/13 kb</div>
<svg style="left:1255px;top:750px" width="20" height="16"><path d="M5 16 L20 1 M9 16 L20 5 M13 16 L20 9 M17 16 L20 13" stroke="#9cc0da" stroke-width="1.2"/><path d="M6 16 L20 2 M10 16 L20 6 M14 16 L20 10" stroke="#fff" stroke-width="0.6"/></svg></body></html>
